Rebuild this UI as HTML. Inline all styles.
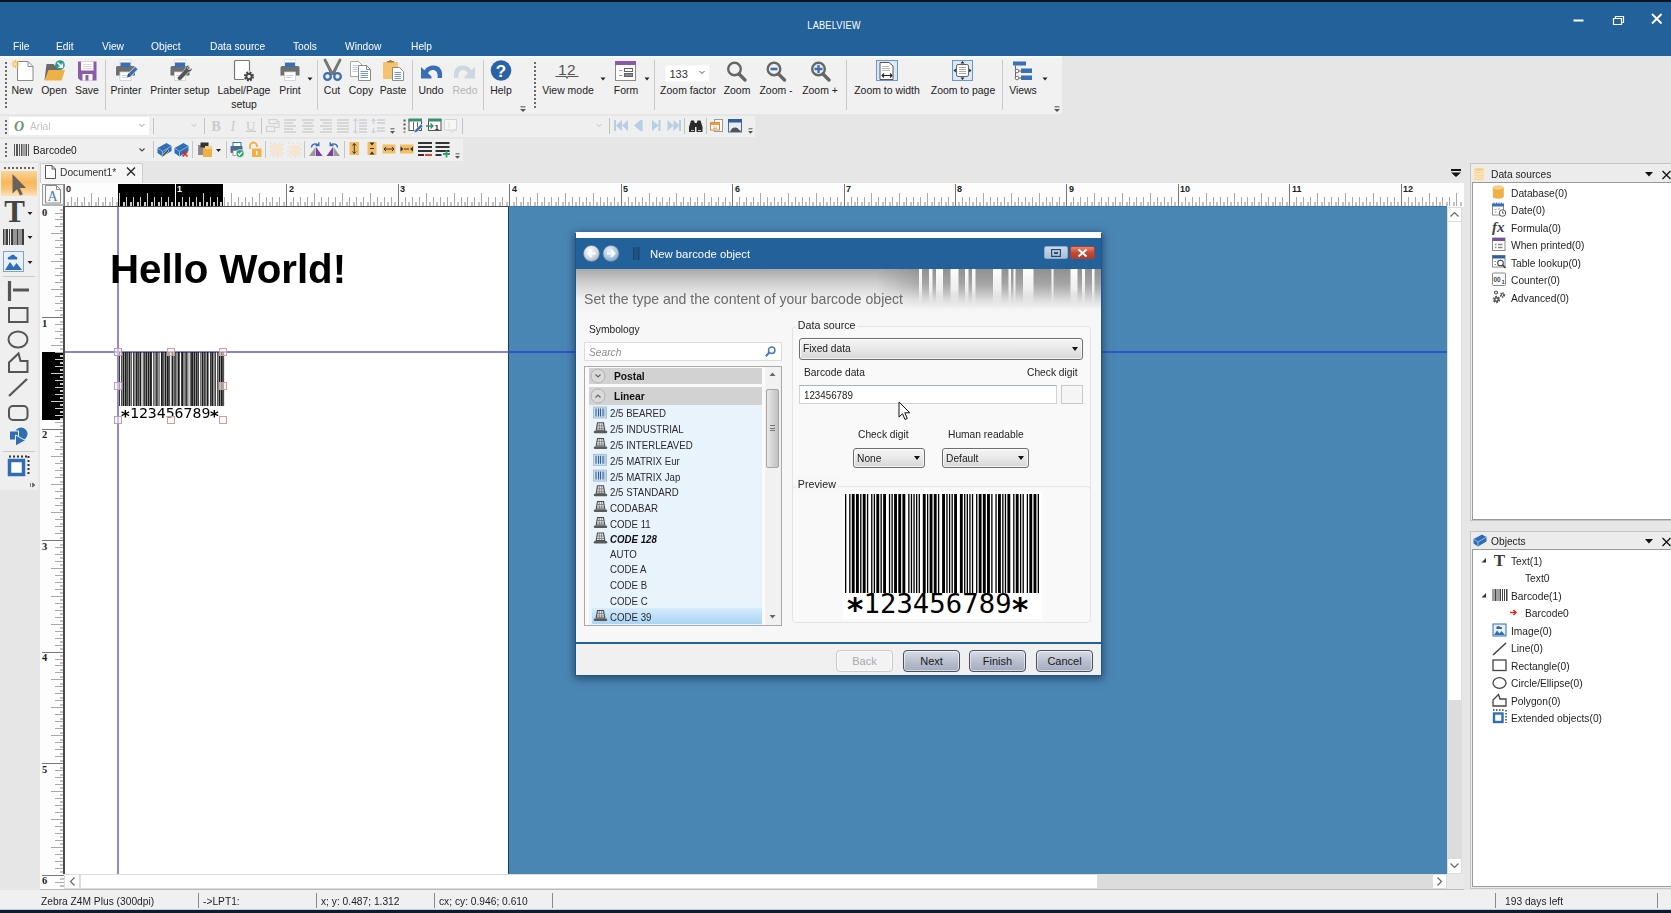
<!DOCTYPE html>
<html lang="en"><head><meta charset="utf-8"><title>LABELVIEW</title>
<style>
*{box-sizing:border-box;margin:0;padding:0}
html,body{width:1671px;height:913px;overflow:hidden}
body{position:relative;background:#e6e6e6;font-family:"Liberation Sans",sans-serif;font-size:11px;color:#1e1e1e;line-height:1}
.a{position:absolute}
.t{position:absolute;white-space:nowrap;line-height:14px;height:14px;transform:scaleX(var(--s,.93));transform-origin:0 50%}
.t.c{transform:translateX(-50%) scaleX(var(--s,.95));transform-origin:50% 50%}
svg{position:absolute;overflow:visible}
/* title + menu */
#topline{left:0;top:0;width:1671px;height:2px;background:#0b1424}
#title{left:0;top:2px;width:1671px;height:54px;background:#22619a}
#title .t{color:#fff}
.menu{color:#fff;font-size:11px;top:36.500px}
/* ribbon */
#ribbon{left:0;top:56px;width:1062px;height:58px;background:#f1f1f1}
.rl{top:83px;font-size:11px;color:#222}
.vsep{position:absolute;width:1px;background:#c9c9c9}
.grip{position:absolute;width:2px;background-image:linear-gradient(#6a6a6a 45%,transparent 45%);background-size:2px 4px}
.tb{position:absolute;background:#efefef}
/* ruler */
#rulh{left:64px;top:183px;width:1398px;height:23px;background:#fdfdfd;overflow:hidden}
#rulh i{position:absolute;bottom:0;width:1px}
#rulh b{position:absolute;top:2px;font-weight:bold;font-size:9px;line-height:10px;color:#222;margin-top:-1px}
#rulv{left:40px;top:207px;width:24px;height:683px;background:#fdfdfd;overflow:hidden}
#rulv i{position:absolute;right:0;height:1px}
#rulv b{position:absolute;left:2px;font-family:"Liberation Serif",serif;font-weight:bold;font-size:10.500px;line-height:10px;color:#222}
.ast{display:inline-block;transform:translateY(.2em) scale(1.15);transform-origin:50% 38%;font-weight:bold}
</style></head><body>
<div class="a" id="title">
 <div class="t c" style="left:834px;top:16px;font-size:10.5px;letter-spacing:.2px;--s:.88">LABELVIEW</div>
 <svg style="left:1572px;top:12px" width="90" height="14" fill="none" stroke="#fff" stroke-width="1.6"><path d="M1.5 6.5h10" stroke-width="2"/><path d="M41.5 4.5h8v6h-8z" stroke-width="1.2"/><path d="M43.5 4.5v-2h8v6h-2" stroke-width="1.2"/><path d="M80 0l9.500 9.500M89.500 0l-9.500 9.500" stroke-width="1.900"/></svg>
 <div class="t menu" style="left:13px">File</div>
 <div class="t menu" style="left:56px">Edit</div>
 <div class="t menu" style="left:102px">View</div>
 <div class="t menu" style="left:151px">Object</div>
 <div class="t menu" style="left:210px">Data source</div>
 <div class="t menu" style="left:293px">Tools</div>
 <div class="t menu" style="left:345px">Window</div>
 <div class="t menu" style="left:411px">Help</div>
</div>
<div class="a" id="topline"></div>
<div class="a" id="ribbon"></div>
<!-- ribbon labels -->
<div class="grip" style="left:5px;top:62px;height:46px"></div>
<div class="t rl c" style="left:22px">New</div>
<div class="t rl c" style="left:54px">Open</div>
<div class="t rl c" style="left:87px">Save</div>
<div class="vsep" style="left:105px;top:60px;height:50px"></div>
<div class="t rl c" style="left:126px">Printer</div>
<div class="t rl c" style="left:180px">Printer setup</div>
<div class="t rl c" style="left:244px">Label/Page</div>
<div class="t rl c" style="left:244px;top:97px">setup</div>
<div class="t rl c" style="left:290px">Print</div>
<div class="vsep" style="left:317px;top:60px;height:50px"></div>
<div class="t rl c" style="left:332px">Cut</div>
<div class="t rl c" style="left:361px">Copy</div>
<div class="t rl c" style="left:393px">Paste</div>
<div class="vsep" style="left:412px;top:60px;height:50px"></div>
<div class="t rl c" style="left:431px">Undo</div>
<div class="t rl c" style="left:465px;color:#b4b4b4">Redo</div>
<div class="vsep" style="left:483px;top:60px;height:50px"></div>
<div class="t rl c" style="left:501px">Help</div>
<div class="grip" style="left:534px;top:62px;height:46px"></div>
<div class="t rl c" style="left:568px">View mode</div>
<div class="t rl c" style="left:626px">Form</div>
<div class="vsep" style="left:654px;top:60px;height:50px"></div>
<div class="t rl c" style="left:688px">Zoom factor</div>
<div class="t rl c" style="left:737px">Zoom</div>
<div class="t rl c" style="left:776px">Zoom -</div>
<div class="t rl c" style="left:820px">Zoom +</div>
<div class="vsep" style="left:846px;top:60px;height:50px"></div>
<div class="t rl c" style="left:887px">Zoom to width</div>
<div class="t rl c" style="left:963px">Zoom to page</div>
<div class="vsep" style="left:1002px;top:60px;height:50px"></div>
<div class="t rl c" style="left:1023px">Views</div>

<!-- toolbar row 2 & 3 -->
<div class="tb" style="left:0;top:116px;width:755px;height:21px"></div>
<div class="tb" style="left:0;top:139px;width:463px;height:22px"></div>
<div class="grip" style="left:5px;top:120px;height:14px"></div>
<div class="grip" style="left:5px;top:143px;height:14px"></div>
<div class="a" style="left:9px;top:117px;width:140px;height:18px;background:#fff"></div>
<div class="t" style="left:30px;top:119px;color:#c4c4c4;font-size:11px">Arial</div>
<div class="t" style="left:33px;top:143px;font-size:11px;color:#222">Barcode0</div>

<!-- tab row -->
<div class="a" style="left:40px;top:163px;width:103px;height:20px;background:#f6f6f6;border:1px solid #d0d0d0;border-bottom:none"></div>
<div class="t" style="left:60px;top:165px;font-size:11px;color:#333">Document1*</div>
<svg style="left:1451px;top:169px" width="10" height="8" fill="#111"><path d="M0 0h10v2h-10zM0 3.5h10l-5 4.5z"/></svg>

<!-- rulers -->
<div class="a" style="left:40px;top:183px;width:1424px;height:24px;background:#fdfdfd"></div>
<div class="a" id="rulh">
 <div class="a" style="left:54px;top:1px;width:105px;height:22px;background:#000"></div>
 <i style="left:-0.5px;height:22px;background:#777"></i><i style="left:3.0px;height:4px;background:#c2c2c2;width:2px"></i><i style="left:6.5px;height:9px;background:#a9a9a9"></i><i style="left:9.9px;height:4px;background:#c2c2c2;width:2px"></i><i style="left:13.4px;height:9px;background:#a9a9a9"></i><i style="left:16.9px;height:4px;background:#c2c2c2;width:2px"></i><i style="left:20.4px;height:9px;background:#a9a9a9"></i><i style="left:23.9px;height:4px;background:#c2c2c2;width:2px"></i><i style="left:27.4px;height:13px;background:#a9a9a9"></i><i style="left:30.8px;height:4px;background:#c2c2c2;width:2px"></i><i style="left:34.3px;height:9px;background:#a9a9a9"></i><i style="left:37.8px;height:4px;background:#c2c2c2;width:2px"></i><i style="left:41.3px;height:9px;background:#a9a9a9"></i><i style="left:44.8px;height:4px;background:#c2c2c2;width:2px"></i><i style="left:48.3px;height:9px;background:#a9a9a9"></i><i style="left:51.7px;height:4px;background:#c2c2c2;width:2px"></i><i style="left:55.2px;height:13px;background:#d0d0d0"></i><i style="left:58.7px;height:4px;background:#d0d0d0;width:2px"></i><i style="left:62.2px;height:9px;background:#d0d0d0"></i><i style="left:65.7px;height:4px;background:#d0d0d0;width:2px"></i><i style="left:69.1px;height:9px;background:#d0d0d0"></i><i style="left:72.6px;height:4px;background:#d0d0d0;width:2px"></i><i style="left:76.1px;height:9px;background:#d0d0d0"></i><i style="left:79.6px;height:4px;background:#d0d0d0;width:2px"></i><i style="left:83.1px;height:13px;background:#d0d0d0"></i><i style="left:86.6px;height:4px;background:#d0d0d0;width:2px"></i><i style="left:90.0px;height:9px;background:#d0d0d0"></i><i style="left:93.5px;height:4px;background:#d0d0d0;width:2px"></i><i style="left:97.0px;height:9px;background:#d0d0d0"></i><i style="left:100.5px;height:4px;background:#d0d0d0;width:2px"></i><i style="left:104.0px;height:9px;background:#d0d0d0"></i><i style="left:107.4px;height:4px;background:#d0d0d0;width:2px"></i><i style="left:110.9px;height:22px;background:#fff"></i><i style="left:114.4px;height:4px;background:#d0d0d0;width:2px"></i><i style="left:117.9px;height:9px;background:#d0d0d0"></i><i style="left:121.4px;height:4px;background:#d0d0d0;width:2px"></i><i style="left:124.9px;height:9px;background:#d0d0d0"></i><i style="left:128.3px;height:4px;background:#d0d0d0;width:2px"></i><i style="left:131.8px;height:9px;background:#d0d0d0"></i><i style="left:135.3px;height:4px;background:#d0d0d0;width:2px"></i><i style="left:138.8px;height:13px;background:#d0d0d0"></i><i style="left:142.3px;height:4px;background:#d0d0d0;width:2px"></i><i style="left:145.8px;height:9px;background:#d0d0d0"></i><i style="left:149.2px;height:4px;background:#d0d0d0;width:2px"></i><i style="left:152.7px;height:9px;background:#d0d0d0"></i><i style="left:156.2px;height:4px;background:#d0d0d0;width:2px"></i><i style="left:159.7px;height:9px;background:#a9a9a9"></i><i style="left:163.2px;height:4px;background:#c2c2c2;width:2px"></i><i style="left:166.6px;height:13px;background:#a9a9a9"></i><i style="left:170.1px;height:4px;background:#c2c2c2;width:2px"></i><i style="left:173.6px;height:9px;background:#a9a9a9"></i><i style="left:177.1px;height:4px;background:#c2c2c2;width:2px"></i><i style="left:180.6px;height:9px;background:#a9a9a9"></i><i style="left:184.1px;height:4px;background:#c2c2c2;width:2px"></i><i style="left:187.5px;height:9px;background:#a9a9a9"></i><i style="left:191.0px;height:4px;background:#c2c2c2;width:2px"></i><i style="left:194.5px;height:13px;background:#a9a9a9"></i><i style="left:198.0px;height:4px;background:#c2c2c2;width:2px"></i><i style="left:201.5px;height:9px;background:#a9a9a9"></i><i style="left:204.9px;height:4px;background:#c2c2c2;width:2px"></i><i style="left:208.4px;height:9px;background:#a9a9a9"></i><i style="left:211.9px;height:4px;background:#c2c2c2;width:2px"></i><i style="left:215.4px;height:9px;background:#a9a9a9"></i><i style="left:218.9px;height:4px;background:#c2c2c2;width:2px"></i><i style="left:222.4px;height:22px;background:#777"></i><i style="left:225.8px;height:4px;background:#c2c2c2;width:2px"></i><i style="left:229.3px;height:9px;background:#a9a9a9"></i><i style="left:232.8px;height:4px;background:#c2c2c2;width:2px"></i><i style="left:236.3px;height:9px;background:#a9a9a9"></i><i style="left:239.8px;height:4px;background:#c2c2c2;width:2px"></i><i style="left:243.3px;height:9px;background:#a9a9a9"></i><i style="left:246.7px;height:4px;background:#c2c2c2;width:2px"></i><i style="left:250.2px;height:13px;background:#a9a9a9"></i><i style="left:253.7px;height:4px;background:#c2c2c2;width:2px"></i><i style="left:257.2px;height:9px;background:#a9a9a9"></i><i style="left:260.7px;height:4px;background:#c2c2c2;width:2px"></i><i style="left:264.1px;height:9px;background:#a9a9a9"></i><i style="left:267.6px;height:4px;background:#c2c2c2;width:2px"></i><i style="left:271.1px;height:9px;background:#a9a9a9"></i><i style="left:274.6px;height:4px;background:#c2c2c2;width:2px"></i><i style="left:278.1px;height:13px;background:#a9a9a9"></i><i style="left:281.6px;height:4px;background:#c2c2c2;width:2px"></i><i style="left:285.0px;height:9px;background:#a9a9a9"></i><i style="left:288.5px;height:4px;background:#c2c2c2;width:2px"></i><i style="left:292.0px;height:9px;background:#a9a9a9"></i><i style="left:295.5px;height:4px;background:#c2c2c2;width:2px"></i><i style="left:299.0px;height:9px;background:#a9a9a9"></i><i style="left:302.5px;height:4px;background:#c2c2c2;width:2px"></i><i style="left:305.9px;height:13px;background:#a9a9a9"></i><i style="left:309.4px;height:4px;background:#c2c2c2;width:2px"></i><i style="left:312.9px;height:9px;background:#a9a9a9"></i><i style="left:316.4px;height:4px;background:#c2c2c2;width:2px"></i><i style="left:319.9px;height:9px;background:#a9a9a9"></i><i style="left:323.3px;height:4px;background:#c2c2c2;width:2px"></i><i style="left:326.8px;height:9px;background:#a9a9a9"></i><i style="left:330.3px;height:4px;background:#c2c2c2;width:2px"></i><i style="left:333.8px;height:22px;background:#777"></i><i style="left:337.3px;height:4px;background:#c2c2c2;width:2px"></i><i style="left:340.8px;height:9px;background:#a9a9a9"></i><i style="left:344.2px;height:4px;background:#c2c2c2;width:2px"></i><i style="left:347.7px;height:9px;background:#a9a9a9"></i><i style="left:351.2px;height:4px;background:#c2c2c2;width:2px"></i><i style="left:354.7px;height:9px;background:#a9a9a9"></i><i style="left:358.2px;height:4px;background:#c2c2c2;width:2px"></i><i style="left:361.6px;height:13px;background:#a9a9a9"></i><i style="left:365.1px;height:4px;background:#c2c2c2;width:2px"></i><i style="left:368.6px;height:9px;background:#a9a9a9"></i><i style="left:372.1px;height:4px;background:#c2c2c2;width:2px"></i><i style="left:375.6px;height:9px;background:#a9a9a9"></i><i style="left:379.1px;height:4px;background:#c2c2c2;width:2px"></i><i style="left:382.5px;height:9px;background:#a9a9a9"></i><i style="left:386.0px;height:4px;background:#c2c2c2;width:2px"></i><i style="left:389.5px;height:13px;background:#a9a9a9"></i><i style="left:393.0px;height:4px;background:#c2c2c2;width:2px"></i><i style="left:396.5px;height:9px;background:#a9a9a9"></i><i style="left:400.0px;height:4px;background:#c2c2c2;width:2px"></i><i style="left:403.4px;height:9px;background:#a9a9a9"></i><i style="left:406.9px;height:4px;background:#c2c2c2;width:2px"></i><i style="left:410.4px;height:9px;background:#a9a9a9"></i><i style="left:413.9px;height:4px;background:#c2c2c2;width:2px"></i><i style="left:417.4px;height:13px;background:#a9a9a9"></i><i style="left:420.8px;height:4px;background:#c2c2c2;width:2px"></i><i style="left:424.3px;height:9px;background:#a9a9a9"></i><i style="left:427.8px;height:4px;background:#c2c2c2;width:2px"></i><i style="left:431.3px;height:9px;background:#a9a9a9"></i><i style="left:434.8px;height:4px;background:#c2c2c2;width:2px"></i><i style="left:438.3px;height:9px;background:#a9a9a9"></i><i style="left:441.7px;height:4px;background:#c2c2c2;width:2px"></i><i style="left:445.2px;height:22px;background:#777"></i><i style="left:448.7px;height:4px;background:#c2c2c2;width:2px"></i><i style="left:452.2px;height:9px;background:#a9a9a9"></i><i style="left:455.7px;height:4px;background:#c2c2c2;width:2px"></i><i style="left:459.1px;height:9px;background:#a9a9a9"></i><i style="left:462.6px;height:4px;background:#c2c2c2;width:2px"></i><i style="left:466.1px;height:9px;background:#a9a9a9"></i><i style="left:469.6px;height:4px;background:#c2c2c2;width:2px"></i><i style="left:473.1px;height:13px;background:#a9a9a9"></i><i style="left:476.6px;height:4px;background:#c2c2c2;width:2px"></i><i style="left:480.0px;height:9px;background:#a9a9a9"></i><i style="left:483.5px;height:4px;background:#c2c2c2;width:2px"></i><i style="left:487.0px;height:9px;background:#a9a9a9"></i><i style="left:490.5px;height:4px;background:#c2c2c2;width:2px"></i><i style="left:494.0px;height:9px;background:#a9a9a9"></i><i style="left:497.5px;height:4px;background:#c2c2c2;width:2px"></i><i style="left:500.9px;height:13px;background:#a9a9a9"></i><i style="left:504.4px;height:4px;background:#c2c2c2;width:2px"></i><i style="left:507.9px;height:9px;background:#a9a9a9"></i><i style="left:511.4px;height:4px;background:#c2c2c2;width:2px"></i><i style="left:514.9px;height:9px;background:#a9a9a9"></i><i style="left:518.3px;height:4px;background:#c2c2c2;width:2px"></i><i style="left:521.8px;height:9px;background:#a9a9a9"></i><i style="left:525.3px;height:4px;background:#c2c2c2;width:2px"></i><i style="left:528.8px;height:13px;background:#a9a9a9"></i><i style="left:532.3px;height:4px;background:#c2c2c2;width:2px"></i><i style="left:535.8px;height:9px;background:#a9a9a9"></i><i style="left:539.2px;height:4px;background:#c2c2c2;width:2px"></i><i style="left:542.7px;height:9px;background:#a9a9a9"></i><i style="left:546.2px;height:4px;background:#c2c2c2;width:2px"></i><i style="left:549.7px;height:9px;background:#a9a9a9"></i><i style="left:553.2px;height:4px;background:#c2c2c2;width:2px"></i><i style="left:556.7px;height:22px;background:#777"></i><i style="left:560.1px;height:4px;background:#c2c2c2;width:2px"></i><i style="left:563.6px;height:9px;background:#a9a9a9"></i><i style="left:567.1px;height:4px;background:#c2c2c2;width:2px"></i><i style="left:570.6px;height:9px;background:#a9a9a9"></i><i style="left:574.1px;height:4px;background:#c2c2c2;width:2px"></i><i style="left:577.5px;height:9px;background:#a9a9a9"></i><i style="left:581.0px;height:4px;background:#c2c2c2;width:2px"></i><i style="left:584.5px;height:13px;background:#a9a9a9"></i><i style="left:588.0px;height:4px;background:#c2c2c2;width:2px"></i><i style="left:591.5px;height:9px;background:#a9a9a9"></i><i style="left:595.0px;height:4px;background:#c2c2c2;width:2px"></i><i style="left:598.4px;height:9px;background:#a9a9a9"></i><i style="left:601.9px;height:4px;background:#c2c2c2;width:2px"></i><i style="left:605.4px;height:9px;background:#a9a9a9"></i><i style="left:608.9px;height:4px;background:#c2c2c2;width:2px"></i><i style="left:612.4px;height:13px;background:#a9a9a9"></i><i style="left:615.8px;height:4px;background:#c2c2c2;width:2px"></i><i style="left:619.3px;height:9px;background:#a9a9a9"></i><i style="left:622.8px;height:4px;background:#c2c2c2;width:2px"></i><i style="left:626.3px;height:9px;background:#a9a9a9"></i><i style="left:629.8px;height:4px;background:#c2c2c2;width:2px"></i><i style="left:633.3px;height:9px;background:#a9a9a9"></i><i style="left:636.7px;height:4px;background:#c2c2c2;width:2px"></i><i style="left:640.2px;height:13px;background:#a9a9a9"></i><i style="left:643.7px;height:4px;background:#c2c2c2;width:2px"></i><i style="left:647.2px;height:9px;background:#a9a9a9"></i><i style="left:650.7px;height:4px;background:#c2c2c2;width:2px"></i><i style="left:654.2px;height:9px;background:#a9a9a9"></i><i style="left:657.6px;height:4px;background:#c2c2c2;width:2px"></i><i style="left:661.1px;height:9px;background:#a9a9a9"></i><i style="left:664.6px;height:4px;background:#c2c2c2;width:2px"></i><i style="left:668.1px;height:22px;background:#777"></i><i style="left:671.6px;height:4px;background:#c2c2c2;width:2px"></i><i style="left:675.0px;height:9px;background:#a9a9a9"></i><i style="left:678.5px;height:4px;background:#c2c2c2;width:2px"></i><i style="left:682.0px;height:9px;background:#a9a9a9"></i><i style="left:685.5px;height:4px;background:#c2c2c2;width:2px"></i><i style="left:689.0px;height:9px;background:#a9a9a9"></i><i style="left:692.5px;height:4px;background:#c2c2c2;width:2px"></i><i style="left:695.9px;height:13px;background:#a9a9a9"></i><i style="left:699.4px;height:4px;background:#c2c2c2;width:2px"></i><i style="left:702.9px;height:9px;background:#a9a9a9"></i><i style="left:706.4px;height:4px;background:#c2c2c2;width:2px"></i><i style="left:709.9px;height:9px;background:#a9a9a9"></i><i style="left:713.3px;height:4px;background:#c2c2c2;width:2px"></i><i style="left:716.8px;height:9px;background:#a9a9a9"></i><i style="left:720.3px;height:4px;background:#c2c2c2;width:2px"></i><i style="left:723.8px;height:13px;background:#a9a9a9"></i><i style="left:727.3px;height:4px;background:#c2c2c2;width:2px"></i><i style="left:730.8px;height:9px;background:#a9a9a9"></i><i style="left:734.2px;height:4px;background:#c2c2c2;width:2px"></i><i style="left:737.7px;height:9px;background:#a9a9a9"></i><i style="left:741.2px;height:4px;background:#c2c2c2;width:2px"></i><i style="left:744.7px;height:9px;background:#a9a9a9"></i><i style="left:748.2px;height:4px;background:#c2c2c2;width:2px"></i><i style="left:751.7px;height:13px;background:#a9a9a9"></i><i style="left:755.1px;height:4px;background:#c2c2c2;width:2px"></i><i style="left:758.6px;height:9px;background:#a9a9a9"></i><i style="left:762.1px;height:4px;background:#c2c2c2;width:2px"></i><i style="left:765.6px;height:9px;background:#a9a9a9"></i><i style="left:769.1px;height:4px;background:#c2c2c2;width:2px"></i><i style="left:772.5px;height:9px;background:#a9a9a9"></i><i style="left:776.0px;height:4px;background:#c2c2c2;width:2px"></i><i style="left:779.5px;height:22px;background:#777"></i><i style="left:783.0px;height:4px;background:#c2c2c2;width:2px"></i><i style="left:786.5px;height:9px;background:#a9a9a9"></i><i style="left:790.0px;height:4px;background:#c2c2c2;width:2px"></i><i style="left:793.4px;height:9px;background:#a9a9a9"></i><i style="left:796.9px;height:4px;background:#c2c2c2;width:2px"></i><i style="left:800.4px;height:9px;background:#a9a9a9"></i><i style="left:803.9px;height:4px;background:#c2c2c2;width:2px"></i><i style="left:807.4px;height:13px;background:#a9a9a9"></i><i style="left:810.8px;height:4px;background:#c2c2c2;width:2px"></i><i style="left:814.3px;height:9px;background:#a9a9a9"></i><i style="left:817.8px;height:4px;background:#c2c2c2;width:2px"></i><i style="left:821.3px;height:9px;background:#a9a9a9"></i><i style="left:824.8px;height:4px;background:#c2c2c2;width:2px"></i><i style="left:828.3px;height:9px;background:#a9a9a9"></i><i style="left:831.7px;height:4px;background:#c2c2c2;width:2px"></i><i style="left:835.2px;height:13px;background:#a9a9a9"></i><i style="left:838.7px;height:4px;background:#c2c2c2;width:2px"></i><i style="left:842.2px;height:9px;background:#a9a9a9"></i><i style="left:845.7px;height:4px;background:#c2c2c2;width:2px"></i><i style="left:849.2px;height:9px;background:#a9a9a9"></i><i style="left:852.6px;height:4px;background:#c2c2c2;width:2px"></i><i style="left:856.1px;height:9px;background:#a9a9a9"></i><i style="left:859.6px;height:4px;background:#c2c2c2;width:2px"></i><i style="left:863.1px;height:13px;background:#a9a9a9"></i><i style="left:866.6px;height:4px;background:#c2c2c2;width:2px"></i><i style="left:870.0px;height:9px;background:#a9a9a9"></i><i style="left:873.5px;height:4px;background:#c2c2c2;width:2px"></i><i style="left:877.0px;height:9px;background:#a9a9a9"></i><i style="left:880.5px;height:4px;background:#c2c2c2;width:2px"></i><i style="left:884.0px;height:9px;background:#a9a9a9"></i><i style="left:887.5px;height:4px;background:#c2c2c2;width:2px"></i><i style="left:890.9px;height:22px;background:#777"></i><i style="left:894.4px;height:4px;background:#c2c2c2;width:2px"></i><i style="left:897.9px;height:9px;background:#a9a9a9"></i><i style="left:901.4px;height:4px;background:#c2c2c2;width:2px"></i><i style="left:904.9px;height:9px;background:#a9a9a9"></i><i style="left:908.4px;height:4px;background:#c2c2c2;width:2px"></i><i style="left:911.8px;height:9px;background:#a9a9a9"></i><i style="left:915.3px;height:4px;background:#c2c2c2;width:2px"></i><i style="left:918.8px;height:13px;background:#a9a9a9"></i><i style="left:922.3px;height:4px;background:#c2c2c2;width:2px"></i><i style="left:925.8px;height:9px;background:#a9a9a9"></i><i style="left:929.2px;height:4px;background:#c2c2c2;width:2px"></i><i style="left:932.7px;height:9px;background:#a9a9a9"></i><i style="left:936.2px;height:4px;background:#c2c2c2;width:2px"></i><i style="left:939.7px;height:9px;background:#a9a9a9"></i><i style="left:943.2px;height:4px;background:#c2c2c2;width:2px"></i><i style="left:946.7px;height:13px;background:#a9a9a9"></i><i style="left:950.1px;height:4px;background:#c2c2c2;width:2px"></i><i style="left:953.6px;height:9px;background:#a9a9a9"></i><i style="left:957.1px;height:4px;background:#c2c2c2;width:2px"></i><i style="left:960.6px;height:9px;background:#a9a9a9"></i><i style="left:964.1px;height:4px;background:#c2c2c2;width:2px"></i><i style="left:967.5px;height:9px;background:#a9a9a9"></i><i style="left:971.0px;height:4px;background:#c2c2c2;width:2px"></i><i style="left:974.5px;height:13px;background:#a9a9a9"></i><i style="left:978.0px;height:4px;background:#c2c2c2;width:2px"></i><i style="left:981.5px;height:9px;background:#a9a9a9"></i><i style="left:985.0px;height:4px;background:#c2c2c2;width:2px"></i><i style="left:988.4px;height:9px;background:#a9a9a9"></i><i style="left:991.9px;height:4px;background:#c2c2c2;width:2px"></i><i style="left:995.4px;height:9px;background:#a9a9a9"></i><i style="left:998.9px;height:4px;background:#c2c2c2;width:2px"></i><i style="left:1002.4px;height:22px;background:#777"></i><i style="left:1005.9px;height:4px;background:#c2c2c2;width:2px"></i><i style="left:1009.3px;height:9px;background:#a9a9a9"></i><i style="left:1012.8px;height:4px;background:#c2c2c2;width:2px"></i><i style="left:1016.3px;height:9px;background:#a9a9a9"></i><i style="left:1019.8px;height:4px;background:#c2c2c2;width:2px"></i><i style="left:1023.3px;height:9px;background:#a9a9a9"></i><i style="left:1026.7px;height:4px;background:#c2c2c2;width:2px"></i><i style="left:1030.2px;height:13px;background:#a9a9a9"></i><i style="left:1033.7px;height:4px;background:#c2c2c2;width:2px"></i><i style="left:1037.2px;height:9px;background:#a9a9a9"></i><i style="left:1040.7px;height:4px;background:#c2c2c2;width:2px"></i><i style="left:1044.2px;height:9px;background:#a9a9a9"></i><i style="left:1047.6px;height:4px;background:#c2c2c2;width:2px"></i><i style="left:1051.1px;height:9px;background:#a9a9a9"></i><i style="left:1054.6px;height:4px;background:#c2c2c2;width:2px"></i><i style="left:1058.1px;height:13px;background:#a9a9a9"></i><i style="left:1061.6px;height:4px;background:#c2c2c2;width:2px"></i><i style="left:1065.0px;height:9px;background:#a9a9a9"></i><i style="left:1068.5px;height:4px;background:#c2c2c2;width:2px"></i><i style="left:1072.0px;height:9px;background:#a9a9a9"></i><i style="left:1075.5px;height:4px;background:#c2c2c2;width:2px"></i><i style="left:1079.0px;height:9px;background:#a9a9a9"></i><i style="left:1082.5px;height:4px;background:#c2c2c2;width:2px"></i><i style="left:1085.9px;height:13px;background:#a9a9a9"></i><i style="left:1089.4px;height:4px;background:#c2c2c2;width:2px"></i><i style="left:1092.9px;height:9px;background:#a9a9a9"></i><i style="left:1096.4px;height:4px;background:#c2c2c2;width:2px"></i><i style="left:1099.9px;height:9px;background:#a9a9a9"></i><i style="left:1103.4px;height:4px;background:#c2c2c2;width:2px"></i><i style="left:1106.8px;height:9px;background:#a9a9a9"></i><i style="left:1110.3px;height:4px;background:#c2c2c2;width:2px"></i><i style="left:1113.8px;height:22px;background:#777"></i><i style="left:1117.3px;height:4px;background:#c2c2c2;width:2px"></i><i style="left:1120.8px;height:9px;background:#a9a9a9"></i><i style="left:1124.2px;height:4px;background:#c2c2c2;width:2px"></i><i style="left:1127.7px;height:9px;background:#a9a9a9"></i><i style="left:1131.2px;height:4px;background:#c2c2c2;width:2px"></i><i style="left:1134.7px;height:9px;background:#a9a9a9"></i><i style="left:1138.2px;height:4px;background:#c2c2c2;width:2px"></i><i style="left:1141.7px;height:13px;background:#a9a9a9"></i><i style="left:1145.1px;height:4px;background:#c2c2c2;width:2px"></i><i style="left:1148.6px;height:9px;background:#a9a9a9"></i><i style="left:1152.1px;height:4px;background:#c2c2c2;width:2px"></i><i style="left:1155.6px;height:9px;background:#a9a9a9"></i><i style="left:1159.1px;height:4px;background:#c2c2c2;width:2px"></i><i style="left:1162.6px;height:9px;background:#a9a9a9"></i><i style="left:1166.0px;height:4px;background:#c2c2c2;width:2px"></i><i style="left:1169.5px;height:13px;background:#a9a9a9"></i><i style="left:1173.0px;height:4px;background:#c2c2c2;width:2px"></i><i style="left:1176.5px;height:9px;background:#a9a9a9"></i><i style="left:1180.0px;height:4px;background:#c2c2c2;width:2px"></i><i style="left:1183.4px;height:9px;background:#a9a9a9"></i><i style="left:1186.9px;height:4px;background:#c2c2c2;width:2px"></i><i style="left:1190.4px;height:9px;background:#a9a9a9"></i><i style="left:1193.9px;height:4px;background:#c2c2c2;width:2px"></i><i style="left:1197.4px;height:13px;background:#a9a9a9"></i><i style="left:1200.9px;height:4px;background:#c2c2c2;width:2px"></i><i style="left:1204.3px;height:9px;background:#a9a9a9"></i><i style="left:1207.8px;height:4px;background:#c2c2c2;width:2px"></i><i style="left:1211.3px;height:9px;background:#a9a9a9"></i><i style="left:1214.8px;height:4px;background:#c2c2c2;width:2px"></i><i style="left:1218.3px;height:9px;background:#a9a9a9"></i><i style="left:1221.7px;height:4px;background:#c2c2c2;width:2px"></i><i style="left:1225.2px;height:22px;background:#777"></i><i style="left:1228.7px;height:4px;background:#c2c2c2;width:2px"></i><i style="left:1232.2px;height:9px;background:#a9a9a9"></i><i style="left:1235.7px;height:4px;background:#c2c2c2;width:2px"></i><i style="left:1239.2px;height:9px;background:#a9a9a9"></i><i style="left:1242.6px;height:4px;background:#c2c2c2;width:2px"></i><i style="left:1246.1px;height:9px;background:#a9a9a9"></i><i style="left:1249.6px;height:4px;background:#c2c2c2;width:2px"></i><i style="left:1253.1px;height:13px;background:#a9a9a9"></i><i style="left:1256.6px;height:4px;background:#c2c2c2;width:2px"></i><i style="left:1260.1px;height:9px;background:#a9a9a9"></i><i style="left:1263.5px;height:4px;background:#c2c2c2;width:2px"></i><i style="left:1267.0px;height:9px;background:#a9a9a9"></i><i style="left:1270.5px;height:4px;background:#c2c2c2;width:2px"></i><i style="left:1274.0px;height:9px;background:#a9a9a9"></i><i style="left:1277.5px;height:4px;background:#c2c2c2;width:2px"></i><i style="left:1280.9px;height:13px;background:#a9a9a9"></i><i style="left:1284.4px;height:4px;background:#c2c2c2;width:2px"></i><i style="left:1287.9px;height:9px;background:#a9a9a9"></i><i style="left:1291.4px;height:4px;background:#c2c2c2;width:2px"></i><i style="left:1294.9px;height:9px;background:#a9a9a9"></i><i style="left:1298.4px;height:4px;background:#c2c2c2;width:2px"></i><i style="left:1301.8px;height:9px;background:#a9a9a9"></i><i style="left:1305.3px;height:4px;background:#c2c2c2;width:2px"></i><i style="left:1308.8px;height:13px;background:#a9a9a9"></i><i style="left:1312.3px;height:4px;background:#c2c2c2;width:2px"></i><i style="left:1315.8px;height:9px;background:#a9a9a9"></i><i style="left:1319.2px;height:4px;background:#c2c2c2;width:2px"></i><i style="left:1322.7px;height:9px;background:#a9a9a9"></i><i style="left:1326.2px;height:4px;background:#c2c2c2;width:2px"></i><i style="left:1329.7px;height:9px;background:#a9a9a9"></i><i style="left:1333.2px;height:4px;background:#c2c2c2;width:2px"></i><i style="left:1336.7px;height:22px;background:#777"></i><i style="left:1340.1px;height:4px;background:#c2c2c2;width:2px"></i><i style="left:1343.6px;height:9px;background:#a9a9a9"></i><i style="left:1347.1px;height:4px;background:#c2c2c2;width:2px"></i><i style="left:1350.6px;height:9px;background:#a9a9a9"></i><i style="left:1354.1px;height:4px;background:#c2c2c2;width:2px"></i><i style="left:1357.6px;height:9px;background:#a9a9a9"></i><i style="left:1361.0px;height:4px;background:#c2c2c2;width:2px"></i><i style="left:1364.5px;height:13px;background:#a9a9a9"></i><i style="left:1368.0px;height:4px;background:#c2c2c2;width:2px"></i><i style="left:1371.5px;height:9px;background:#a9a9a9"></i><i style="left:1375.0px;height:4px;background:#c2c2c2;width:2px"></i><i style="left:1378.4px;height:9px;background:#a9a9a9"></i><i style="left:1381.9px;height:4px;background:#c2c2c2;width:2px"></i><i style="left:1385.4px;height:9px;background:#a9a9a9"></i><i style="left:1388.9px;height:4px;background:#c2c2c2;width:2px"></i><i style="left:1392.4px;height:13px;background:#a9a9a9"></i><i style="left:1395.9px;height:4px;background:#c2c2c2;width:2px"></i>
 <b style="left:2px">0</b><b style="left:113px;color:#fff;font-weight:bold">1</b><b style="left:225px">2</b><b style="left:336px">3</b><b style="left:448px">4</b><b style="left:559px">5</b><b style="left:671px">6</b><b style="left:782px">7</b><b style="left:893px">8</b><b style="left:1005px">9</b><b style="left:1116px">10</b><b style="left:1228px">11</b><b style="left:1339px">12</b>
</div>
<div class="a" id="rulv">
 <div class="a" style="left:2px;top:144.500px;width:22px;height:68px;background:#000"></div>
 <i style="top:-1.5px;width:22px;background:#777"></i><i style="top:2.0px;width:4px;background:#c2c2c2;height:2px"></i><i style="top:5.5px;width:9px;background:#a9a9a9"></i><i style="top:9.0px;width:4px;background:#c2c2c2;height:2px"></i><i style="top:12.4px;width:9px;background:#a9a9a9"></i><i style="top:15.9px;width:4px;background:#c2c2c2;height:2px"></i><i style="top:19.4px;width:9px;background:#a9a9a9"></i><i style="top:22.9px;width:4px;background:#c2c2c2;height:2px"></i><i style="top:26.4px;width:13px;background:#a9a9a9"></i><i style="top:29.9px;width:4px;background:#c2c2c2;height:2px"></i><i style="top:33.3px;width:9px;background:#a9a9a9"></i><i style="top:36.8px;width:4px;background:#c2c2c2;height:2px"></i><i style="top:40.3px;width:9px;background:#a9a9a9"></i><i style="top:43.8px;width:4px;background:#c2c2c2;height:2px"></i><i style="top:47.3px;width:9px;background:#a9a9a9"></i><i style="top:50.8px;width:4px;background:#c2c2c2;height:2px"></i><i style="top:54.2px;width:13px;background:#a9a9a9"></i><i style="top:57.7px;width:4px;background:#c2c2c2;height:2px"></i><i style="top:61.2px;width:9px;background:#a9a9a9"></i><i style="top:64.7px;width:4px;background:#c2c2c2;height:2px"></i><i style="top:68.2px;width:9px;background:#a9a9a9"></i><i style="top:71.7px;width:4px;background:#c2c2c2;height:2px"></i><i style="top:75.2px;width:9px;background:#a9a9a9"></i><i style="top:78.6px;width:4px;background:#c2c2c2;height:2px"></i><i style="top:82.1px;width:13px;background:#a9a9a9"></i><i style="top:85.6px;width:4px;background:#c2c2c2;height:2px"></i><i style="top:89.1px;width:9px;background:#a9a9a9"></i><i style="top:92.6px;width:4px;background:#c2c2c2;height:2px"></i><i style="top:96.1px;width:9px;background:#a9a9a9"></i><i style="top:99.5px;width:4px;background:#c2c2c2;height:2px"></i><i style="top:103.0px;width:9px;background:#a9a9a9"></i><i style="top:106.5px;width:4px;background:#c2c2c2;height:2px"></i><i style="top:110.0px;width:22px;background:#777"></i><i style="top:113.5px;width:4px;background:#c2c2c2;height:2px"></i><i style="top:117.0px;width:9px;background:#a9a9a9"></i><i style="top:120.5px;width:4px;background:#c2c2c2;height:2px"></i><i style="top:123.9px;width:9px;background:#a9a9a9"></i><i style="top:127.4px;width:4px;background:#c2c2c2;height:2px"></i><i style="top:130.9px;width:9px;background:#a9a9a9"></i><i style="top:134.4px;width:4px;background:#c2c2c2;height:2px"></i><i style="top:137.9px;width:13px;background:#a9a9a9"></i><i style="top:141.4px;width:4px;background:#c2c2c2;height:2px"></i><i style="top:144.8px;width:9px;background:#a9a9a9"></i><i style="top:148.3px;width:4px;background:#d0d0d0;height:2px"></i><i style="top:151.8px;width:9px;background:#d0d0d0"></i><i style="top:155.3px;width:4px;background:#d0d0d0;height:2px"></i><i style="top:158.8px;width:9px;background:#d0d0d0"></i><i style="top:162.3px;width:4px;background:#d0d0d0;height:2px"></i><i style="top:165.8px;width:13px;background:#d0d0d0"></i><i style="top:169.2px;width:4px;background:#d0d0d0;height:2px"></i><i style="top:172.7px;width:9px;background:#d0d0d0"></i><i style="top:176.2px;width:4px;background:#d0d0d0;height:2px"></i><i style="top:179.7px;width:9px;background:#d0d0d0"></i><i style="top:183.2px;width:4px;background:#d0d0d0;height:2px"></i><i style="top:186.7px;width:9px;background:#d0d0d0"></i><i style="top:190.1px;width:4px;background:#d0d0d0;height:2px"></i><i style="top:193.6px;width:13px;background:#d0d0d0"></i><i style="top:197.1px;width:4px;background:#d0d0d0;height:2px"></i><i style="top:200.6px;width:9px;background:#d0d0d0"></i><i style="top:204.1px;width:4px;background:#d0d0d0;height:2px"></i><i style="top:207.6px;width:9px;background:#d0d0d0"></i><i style="top:211.0px;width:4px;background:#d0d0d0;height:2px"></i><i style="top:214.5px;width:9px;background:#a9a9a9"></i><i style="top:218.0px;width:4px;background:#c2c2c2;height:2px"></i><i style="top:221.5px;width:22px;background:#777"></i><i style="top:225.0px;width:4px;background:#c2c2c2;height:2px"></i><i style="top:228.5px;width:9px;background:#a9a9a9"></i><i style="top:232.0px;width:4px;background:#c2c2c2;height:2px"></i><i style="top:235.4px;width:9px;background:#a9a9a9"></i><i style="top:238.9px;width:4px;background:#c2c2c2;height:2px"></i><i style="top:242.4px;width:9px;background:#a9a9a9"></i><i style="top:245.9px;width:4px;background:#c2c2c2;height:2px"></i><i style="top:249.4px;width:13px;background:#a9a9a9"></i><i style="top:252.9px;width:4px;background:#c2c2c2;height:2px"></i><i style="top:256.3px;width:9px;background:#a9a9a9"></i><i style="top:259.8px;width:4px;background:#c2c2c2;height:2px"></i><i style="top:263.3px;width:9px;background:#a9a9a9"></i><i style="top:266.8px;width:4px;background:#c2c2c2;height:2px"></i><i style="top:270.3px;width:9px;background:#a9a9a9"></i><i style="top:273.8px;width:4px;background:#c2c2c2;height:2px"></i><i style="top:277.2px;width:13px;background:#a9a9a9"></i><i style="top:280.7px;width:4px;background:#c2c2c2;height:2px"></i><i style="top:284.2px;width:9px;background:#a9a9a9"></i><i style="top:287.7px;width:4px;background:#c2c2c2;height:2px"></i><i style="top:291.2px;width:9px;background:#a9a9a9"></i><i style="top:294.7px;width:4px;background:#c2c2c2;height:2px"></i><i style="top:298.2px;width:9px;background:#a9a9a9"></i><i style="top:301.6px;width:4px;background:#c2c2c2;height:2px"></i><i style="top:305.1px;width:13px;background:#a9a9a9"></i><i style="top:308.6px;width:4px;background:#c2c2c2;height:2px"></i><i style="top:312.1px;width:9px;background:#a9a9a9"></i><i style="top:315.6px;width:4px;background:#c2c2c2;height:2px"></i><i style="top:319.1px;width:9px;background:#a9a9a9"></i><i style="top:322.5px;width:4px;background:#c2c2c2;height:2px"></i><i style="top:326.0px;width:9px;background:#a9a9a9"></i><i style="top:329.5px;width:4px;background:#c2c2c2;height:2px"></i><i style="top:333.0px;width:22px;background:#777"></i><i style="top:336.5px;width:4px;background:#c2c2c2;height:2px"></i><i style="top:340.0px;width:9px;background:#a9a9a9"></i><i style="top:343.5px;width:4px;background:#c2c2c2;height:2px"></i><i style="top:346.9px;width:9px;background:#a9a9a9"></i><i style="top:350.4px;width:4px;background:#c2c2c2;height:2px"></i><i style="top:353.9px;width:9px;background:#a9a9a9"></i><i style="top:357.4px;width:4px;background:#c2c2c2;height:2px"></i><i style="top:360.9px;width:13px;background:#a9a9a9"></i><i style="top:364.4px;width:4px;background:#c2c2c2;height:2px"></i><i style="top:367.8px;width:9px;background:#a9a9a9"></i><i style="top:371.3px;width:4px;background:#c2c2c2;height:2px"></i><i style="top:374.8px;width:9px;background:#a9a9a9"></i><i style="top:378.3px;width:4px;background:#c2c2c2;height:2px"></i><i style="top:381.8px;width:9px;background:#a9a9a9"></i><i style="top:385.3px;width:4px;background:#c2c2c2;height:2px"></i><i style="top:388.8px;width:13px;background:#a9a9a9"></i><i style="top:392.2px;width:4px;background:#c2c2c2;height:2px"></i><i style="top:395.7px;width:9px;background:#a9a9a9"></i><i style="top:399.2px;width:4px;background:#c2c2c2;height:2px"></i><i style="top:402.7px;width:9px;background:#a9a9a9"></i><i style="top:406.2px;width:4px;background:#c2c2c2;height:2px"></i><i style="top:409.7px;width:9px;background:#a9a9a9"></i><i style="top:413.1px;width:4px;background:#c2c2c2;height:2px"></i><i style="top:416.6px;width:13px;background:#a9a9a9"></i><i style="top:420.1px;width:4px;background:#c2c2c2;height:2px"></i><i style="top:423.6px;width:9px;background:#a9a9a9"></i><i style="top:427.1px;width:4px;background:#c2c2c2;height:2px"></i><i style="top:430.6px;width:9px;background:#a9a9a9"></i><i style="top:434.0px;width:4px;background:#c2c2c2;height:2px"></i><i style="top:437.5px;width:9px;background:#a9a9a9"></i><i style="top:441.0px;width:4px;background:#c2c2c2;height:2px"></i><i style="top:444.5px;width:22px;background:#777"></i><i style="top:448.0px;width:4px;background:#c2c2c2;height:2px"></i><i style="top:451.5px;width:9px;background:#a9a9a9"></i><i style="top:455.0px;width:4px;background:#c2c2c2;height:2px"></i><i style="top:458.4px;width:9px;background:#a9a9a9"></i><i style="top:461.9px;width:4px;background:#c2c2c2;height:2px"></i><i style="top:465.4px;width:9px;background:#a9a9a9"></i><i style="top:468.9px;width:4px;background:#c2c2c2;height:2px"></i><i style="top:472.4px;width:13px;background:#a9a9a9"></i><i style="top:475.9px;width:4px;background:#c2c2c2;height:2px"></i><i style="top:479.3px;width:9px;background:#a9a9a9"></i><i style="top:482.8px;width:4px;background:#c2c2c2;height:2px"></i><i style="top:486.3px;width:9px;background:#a9a9a9"></i><i style="top:489.8px;width:4px;background:#c2c2c2;height:2px"></i><i style="top:493.3px;width:9px;background:#a9a9a9"></i><i style="top:496.8px;width:4px;background:#c2c2c2;height:2px"></i><i style="top:500.2px;width:13px;background:#a9a9a9"></i><i style="top:503.7px;width:4px;background:#c2c2c2;height:2px"></i><i style="top:507.2px;width:9px;background:#a9a9a9"></i><i style="top:510.7px;width:4px;background:#c2c2c2;height:2px"></i><i style="top:514.2px;width:9px;background:#a9a9a9"></i><i style="top:517.7px;width:4px;background:#c2c2c2;height:2px"></i><i style="top:521.2px;width:9px;background:#a9a9a9"></i><i style="top:524.6px;width:4px;background:#c2c2c2;height:2px"></i><i style="top:528.1px;width:13px;background:#a9a9a9"></i><i style="top:531.6px;width:4px;background:#c2c2c2;height:2px"></i><i style="top:535.1px;width:9px;background:#a9a9a9"></i><i style="top:538.6px;width:4px;background:#c2c2c2;height:2px"></i><i style="top:542.1px;width:9px;background:#a9a9a9"></i><i style="top:545.5px;width:4px;background:#c2c2c2;height:2px"></i><i style="top:549.0px;width:9px;background:#a9a9a9"></i><i style="top:552.5px;width:4px;background:#c2c2c2;height:2px"></i><i style="top:556.0px;width:22px;background:#777"></i><i style="top:559.5px;width:4px;background:#c2c2c2;height:2px"></i><i style="top:563.0px;width:9px;background:#a9a9a9"></i><i style="top:566.5px;width:4px;background:#c2c2c2;height:2px"></i><i style="top:569.9px;width:9px;background:#a9a9a9"></i><i style="top:573.4px;width:4px;background:#c2c2c2;height:2px"></i><i style="top:576.9px;width:9px;background:#a9a9a9"></i><i style="top:580.4px;width:4px;background:#c2c2c2;height:2px"></i><i style="top:583.9px;width:13px;background:#a9a9a9"></i><i style="top:587.4px;width:4px;background:#c2c2c2;height:2px"></i><i style="top:590.8px;width:9px;background:#a9a9a9"></i><i style="top:594.3px;width:4px;background:#c2c2c2;height:2px"></i><i style="top:597.8px;width:9px;background:#a9a9a9"></i><i style="top:601.3px;width:4px;background:#c2c2c2;height:2px"></i><i style="top:604.8px;width:9px;background:#a9a9a9"></i><i style="top:608.3px;width:4px;background:#c2c2c2;height:2px"></i><i style="top:611.8px;width:13px;background:#a9a9a9"></i><i style="top:615.2px;width:4px;background:#c2c2c2;height:2px"></i><i style="top:618.7px;width:9px;background:#a9a9a9"></i><i style="top:622.2px;width:4px;background:#c2c2c2;height:2px"></i><i style="top:625.7px;width:9px;background:#a9a9a9"></i><i style="top:629.2px;width:4px;background:#c2c2c2;height:2px"></i><i style="top:632.7px;width:9px;background:#a9a9a9"></i><i style="top:636.1px;width:4px;background:#c2c2c2;height:2px"></i><i style="top:639.6px;width:13px;background:#a9a9a9"></i><i style="top:643.1px;width:4px;background:#c2c2c2;height:2px"></i><i style="top:646.6px;width:9px;background:#a9a9a9"></i><i style="top:650.1px;width:4px;background:#c2c2c2;height:2px"></i><i style="top:653.6px;width:9px;background:#a9a9a9"></i><i style="top:657.0px;width:4px;background:#c2c2c2;height:2px"></i><i style="top:660.5px;width:9px;background:#a9a9a9"></i><i style="top:664.0px;width:4px;background:#c2c2c2;height:2px"></i><i style="top:667.5px;width:22px;background:#777"></i><i style="top:671.0px;width:4px;background:#c2c2c2;height:2px"></i><i style="top:674.5px;width:9px;background:#a9a9a9"></i><i style="top:678.0px;width:4px;background:#c2c2c2;height:2px"></i>
 <b style="top:1px">0</b><b style="top:112px">1</b><b style="top:223px">2</b><b style="top:335px">3</b><b style="top:446px">4</b><b style="top:558px">5</b><b style="top:669px">6</b>
</div>

<!-- canvas -->
<div class="a" style="left:64px;top:207px;width:444px;height:667px;background:#fff"></div>
<div class="a" style="left:508px;top:207px;width:939px;height:667px;background:#4a86b4"></div>
<div class="a" style="left:508px;top:207px;width:1px;height:667px;background:#1c3f5e"></div>
<div class="a" style="left:117px;top:207px;width:2px;height:667px;background:#8c8cc6"></div>
<div class="a" style="left:64px;top:351px;width:444px;height:2px;background:#8585d6"></div><div class="a" style="left:508px;top:351px;width:939px;height:2px;background:#3050c4;opacity:.9"></div>
<div class="t" style="left:110px;top:246px;height:46px;line-height:46px;font-size:40.5px;font-weight:bold;color:#000;--s:.993">Hello World!</div>
<div class="a" style="left:119px;top:352px;width:105px;height:54px"><svg width="105" height="54" viewBox="0 0 105 54" fill="#1c1c1c" shape-rendering="auto"><rect x="0.00" y="0" width="0.86" height="54"/><rect x="2.22" y="0" width="0.86" height="54"/><rect x="3.54" y="0" width="1.86" height="54"/><rect x="5.86" y="0" width="1.86" height="54"/><rect x="8.18" y="0" width="0.86" height="54"/><rect x="9.51" y="0" width="1.86" height="54"/><rect x="11.82" y="0" width="0.86" height="54"/><rect x="14.14" y="0" width="0.86" height="54"/><rect x="15.47" y="0" width="0.86" height="54"/><rect x="16.79" y="0" width="1.86" height="54"/><rect x="19.11" y="0" width="0.86" height="54"/><rect x="20.44" y="0" width="1.86" height="54"/><rect x="23.75" y="0" width="0.86" height="54"/><rect x="25.07" y="0" width="0.86" height="54"/><rect x="26.40" y="0" width="1.86" height="54"/><rect x="28.72" y="0" width="1.86" height="54"/><rect x="31.04" y="0" width="1.86" height="54"/><rect x="34.35" y="0" width="0.86" height="54"/><rect x="35.67" y="0" width="0.86" height="54"/><rect x="37.00" y="0" width="0.86" height="54"/><rect x="38.32" y="0" width="0.86" height="54"/><rect x="39.65" y="0" width="0.86" height="54"/><rect x="41.97" y="0" width="1.86" height="54"/><rect x="44.28" y="0" width="0.86" height="54"/><rect x="45.61" y="0" width="1.86" height="54"/><rect x="47.93" y="0" width="1.86" height="54"/><rect x="50.25" y="0" width="0.86" height="54"/><rect x="52.57" y="0" width="1.86" height="54"/><rect x="54.88" y="0" width="0.86" height="54"/><rect x="56.21" y="0" width="0.86" height="54"/><rect x="57.53" y="0" width="0.86" height="54"/><rect x="58.86" y="0" width="1.86" height="54"/><rect x="62.17" y="0" width="1.86" height="54"/><rect x="64.49" y="0" width="0.86" height="54"/><rect x="65.81" y="0" width="0.86" height="54"/><rect x="67.14" y="0" width="0.86" height="54"/><rect x="68.46" y="0" width="0.86" height="54"/><rect x="70.78" y="0" width="0.86" height="54"/><rect x="72.11" y="0" width="1.86" height="54"/><rect x="74.43" y="0" width="1.86" height="54"/><rect x="76.75" y="0" width="1.86" height="54"/><rect x="79.06" y="0" width="0.86" height="54"/><rect x="81.38" y="0" width="0.86" height="54"/><rect x="82.71" y="0" width="1.86" height="54"/><rect x="85.03" y="0" width="0.86" height="54"/><rect x="86.35" y="0" width="0.86" height="54"/><rect x="87.68" y="0" width="1.86" height="54"/><rect x="90.99" y="0" width="0.86" height="54"/><rect x="92.31" y="0" width="1.86" height="54"/><rect x="94.63" y="0" width="0.86" height="54"/><rect x="95.96" y="0" width="0.86" height="54"/><rect x="98.28" y="0" width="0.86" height="54"/><rect x="99.60" y="0" width="1.86" height="54"/><rect x="101.92" y="0" width="1.86" height="54"/><rect x="104.24" y="0" width="0.86" height="54"/></svg></div>
<div class="t" style="left:121px;top:405px;height:16px;line-height:16px;font-family:'DejaVu Sans Mono','Liberation Mono',monospace;font-size:14px;color:#000;--s:1.06"><span class="ast">*</span>123456789<span class="ast">*</span></div>

<div class="a" style="left:63px;top:206px;width:446px;height:1px;background:#4a4a4a"></div><div class="a" style="left:509px;top:206px;width:938px;height:1px;background:#3f76a3"></div>
<div class="a" style="left:63px;top:206px;width:2px;height:668px;background:#4a4a4a"></div>
<svg style="left:114px;top:348px" width="114" height="78" fill="rgba(255,240,230,.55)" stroke="#c9a0a0" stroke-width="1"><rect x=".5" y=".5" width="7" height="7" stroke="#b79ad0"/><rect x="53.500" y=".5" width="7" height="7"/><rect x="105.500" y=".5" width="7" height="7"/><rect x=".5" y="34.500" width="7" height="7" stroke="#b79ad0"/><rect x="105.500" y="34.500" width="7" height="7"/><rect x=".5" y="68.500" width="7" height="7" stroke="#b79ad0"/><rect x="53.500" y="68.500" width="7" height="7"/><rect x="105.500" y="68.500" width="7" height="7"/></svg>
<!-- scrollbars -->
<div class="a" style="left:1447px;top:207px;width:15px;height:667px;background:#dcdcdc"></div>
<div class="a" style="left:1447px;top:207px;width:15px;height:494px;background:#fff;border:1px solid #dcdcdc"></div>
<div class="a" style="left:1447px;top:207px;width:15px;height:15px;background:#fff;border:1px solid #dcdcdc"></div>
<div class="a" style="left:1447px;top:858px;width:15px;height:16px;background:#fff;border:1px solid #dcdcdc"></div>
<svg style="left:1450px;top:211px" width="9" height="6" fill="none" stroke="#666" stroke-width="1.2"><path d="M.5 5.5l4-4l4 4"/></svg>
<svg style="left:1450px;top:863px" width="9" height="6" fill="none" stroke="#666" stroke-width="1.2"><path d="M.5 .5l4 4l4-4"/></svg>
<div class="a" style="left:64px;top:874px;width:1400px;height:16px;background:#e9e9e9"></div><div class="a" style="left:40px;top:889px;width:1424px;height:1px;background:#b9b9b9"></div>
<div class="a" style="left:64px;top:874px;width:1383px;height:15px;background:#dcdcdc"></div>
<div class="a" style="left:64px;top:874px;width:16px;height:15px;background:#fff;border:1px solid #dcdcdc"></div>
<div class="a" style="left:80px;top:874px;width:1018px;height:15px;background:#fff;border:1px solid #dcdcdc"></div>
<div class="a" style="left:1432px;top:874px;width:15px;height:15px;background:#fff;border:1px solid #dcdcdc"></div>
<svg style="left:69px;top:877px" width="6" height="9" fill="none" stroke="#666" stroke-width="1.2"><path d="M5.5 .5l-4 4l4 4"/></svg>
<svg style="left:1437px;top:877px" width="6" height="9" fill="none" stroke="#666" stroke-width="1.2"><path d="M.5 .5l4 4l-4 4"/></svg>


<!-- right panels -->
<div class="a" style="left:1470px;top:163px;width:205px;height:358px;background:#ececec;border:1px solid #c4c4c4"></div>
<div class="a" style="left:1472px;top:182px;width:205px;height:338px;background:#fff;border:1px solid #9a9a9a"></div>
<div class="t" style="left:1491px;top:167px;font-size:11px;color:#222">Data sources</div>
<div class="a" style="left:1470px;top:531px;width:205px;height:358px;background:#ececec;border:1px solid #c4c4c4"></div>
<div class="a" style="left:1472px;top:549px;width:205px;height:338px;background:#fff;border:1px solid #9a9a9a"></div>
<div class="t" style="left:1491px;top:534px;font-size:11px;color:#222">Objects</div>

<!-- status bar -->
<div class="a" style="left:0;top:890px;width:1671px;height:20px;background:#f0f0f0"></div>
<div class="a" style="left:0;top:909px;width:1671px;height:4px;background:#0c1a2c"></div>
<div class="a" style="left:0;top:909px;width:1671px;height:1px;background:#b9cfe3"></div>
<div class="t" style="left:41px;top:894px;font-size:11px">Zebra Z4M Plus (300dpi)</div>
<div class="t" style="left:203px;top:894px;font-size:11px">-&gt;LPT1:</div>
<div class="t" style="left:321px;top:894px;font-size:11px">x; y: 0.487; 1.312</div>
<div class="t" style="left:439px;top:894px;font-size:11px">cx; cy: 0.946; 0.610</div>
<div class="t" style="left:1505px;top:894px;font-size:11px">193 days left</div>
<div class="vsep" style="left:198px;top:893px;height:15px;background:#8a8a8a"></div>
<div class="vsep" style="left:316px;top:893px;height:15px;background:#8a8a8a"></div>
<div class="vsep" style="left:434px;top:893px;height:15px;background:#8a8a8a"></div>
<div class="vsep" style="left:552px;top:893px;height:15px;background:#8a8a8a"></div>
<div class="vsep" style="left:1495px;top:893px;height:15px;background:#8a8a8a"></div>
<div class="vsep" style="left:1657px;top:893px;height:15px;background:#8a8a8a"></div>
<svg style="left:0;top:56px" width="1062" height="58">
<defs>
 <g id="prn"><rect x="5" y="0" width="11" height="6" fill="#fff" stroke="#d5dbe3" stroke-width=".8"/><path d="M1 7.500a1.500 1.500 0 0 1 1.500-1.500h16a1.500 1.500 0 0 1 1.500 1.500v8h-19z" fill="#6e6e6e"/><rect x="5.500" y="2.500" width="10" height="4.500" fill="#3a6fb5"/><rect x="5" y="12" width="11" height="8.500" fill="#fff" stroke="#c9ced6" stroke-width=".8"/><path d="M7 15.500h7M7 17.500h5" stroke="#c5cedb" stroke-width="1"/></g>
 <g id="mag"><circle cx="8.500" cy="8" r="6.300" fill="none" stroke="#666" stroke-width="2.400"/><path d="M13 13l6 6" stroke="#666" stroke-width="3.400" stroke-linecap="round"/></g>
 <path id="dda" d="M0 0h5l-2.500 3z" fill="#222"/>
 <g id="ovf" fill="none" stroke="#666" stroke-width="1.200"><path d="M.5 .8h5"/><path d="M0 3h6l-3 3z" fill="#555" stroke="none"/></g>
</defs>
<rect x="0" y="0" width="1062" height="2" fill="#f9f9f9"/>
<!-- New -->
<path d="M17.500 5.500h10.500l5 5v14h-15.500z" fill="#fff" stroke="#8a8a8a"/><path d="M28 5.500v5h5" fill="none" stroke="#8a8a8a"/>
<g stroke="#f2b544" stroke-width="1.200"><path d="M15.500 4v8M11.500 8h8M12.700 5.200l5.600 5.600M18.300 5.200l-5.600 5.600"/></g><circle cx="15.500" cy="8" r="1.600" fill="#ffe9b0"/>
<!-- Open -->
<path d="M44.500 24l2-16h7l2 2h6v4z" fill="#6b6b6b"/><path d="M44.500 24.500l4-10.500h16.500l-3.500 10.500z" fill="#f0b048"/><circle cx="60" cy="9" r="4.800" fill="#2a9d8f"/><path d="M57.500 6.500l4.300 4.300M62.300 7.500v3.800h-3.800" stroke="#fff" stroke-width="1.500" fill="none"/>
<!-- Save -->
<path d="M78 5.500h18.500v19h-16l-2.500-2.500z" fill="#8c5aa8"/><rect x="81" y="5.500" width="12.500" height="9" fill="#fff"/><path d="M83 8.500h8.500M83 10.500h8.500M83 12.500h8.500" stroke="#d9d0e3" stroke-width=".9"/><rect x="82.500" y="18" width="10" height="6.500" fill="#fff"/><rect x="85.500" y="19" width="3" height="5.500" fill="#8c5aa8"/>
<!-- Printer -->
<use href="#prn" x="115" y="4"/><path d="M127 21.500l1.200-4l7-7l2.800 2.800l-7 7z" fill="#3a6fb5" stroke="#f1f1f1" stroke-width=".8"/><path d="M127 21.500l1.200-4l2.800 2.800z" fill="#2d4f7f"/>
<!-- Printer setup -->
<use href="#prn" x="169.500" y="4"/><path d="M181 24l7.500-8a3.200 3.200 0 0 0 3.300-4.300l-2 2l-1.800-.5l-.5-1.800l2-2a3.200 3.200 0 0 0-4.200 3.500l-7 7.500a1.400 1.400 0 0 0 2.700 3.600z" fill="#555" stroke="#f1f1f1" stroke-width=".6"/>
<!-- Label/Page setup -->
<rect x="234.500" y="4.500" width="15" height="19" rx="1" fill="#fff" stroke="#777" stroke-width="1.200"/><circle cx="249" cy="20.500" r="5.800" fill="#f1f1f1"/><circle cx="249" cy="20.500" r="3.600" fill="none" stroke="#444" stroke-width="2.800" stroke-dasharray="1.700 1.130"/><circle cx="249" cy="20.500" r="2.600" fill="none" stroke="#444" stroke-width="1.800"/>
<!-- Print -->
<use href="#prn" x="279.500" y="4"/><use href="#dda" x="307.500" y="21.500"/>
<!-- Cut -->
<path d="M325 4l7 13.500M340 4l-7 13.500" stroke="#777" stroke-width="2.800" stroke-linecap="round"/><path d="M324.300 3.500l8.200 14l-2 1.500z M340.700 3.500l-8.200 14l2 1.500z" fill="#777"/><circle cx="327.500" cy="20.500" r="3.300" fill="none" stroke="#3a6fb5" stroke-width="2.300"/><circle cx="337.500" cy="20.500" r="3.300" fill="none" stroke="#3a6fb5" stroke-width="2.300"/>
<!-- Copy -->
<path d="M350.500 5.500h8l3.500 3.500v11.500h-11.500z" fill="#fff" stroke="#a8a8a8"/><path d="M352.500 9.500h5M352.500 11.500h5M352.500 13.500h5M352.500 15.500h5" stroke="#b8c6d8" stroke-width=".9"/><path d="M358.500 9.500h8l4 4v11h-12z" fill="#fff" stroke="#8a8a8a"/><path d="M366.500 9.500v4h4" fill="none" stroke="#8a8a8a"/><path d="M360.500 15.500h7.500M360.500 17.500h7.500M360.500 19.500h7.500M360.500 21.500h7.500" stroke="#6f97c8" stroke-width="1"/>
<!-- Paste -->
<rect x="383" y="6" width="15" height="17" rx="1" fill="#f5c272"/><path d="M387 6.500v-1.500h2a1.600 1.600 0 0 1 3 0h2v1.500z" fill="#a77b3a"/><path d="M392.500 11.500h7l4 4v9h-11z" fill="#fff" stroke="#8a8a8a"/><path d="M394.500 16.500h6.500M394.500 18.500h6.500M394.500 20.500h6.500M394.500 22.500h6.500" stroke="#6f97c8" stroke-width="1"/>
<!-- Undo -->
<path d="M421 22.500v-11.500l3.500 3.300c2.500-4.300 8.500-6.300 13.500-3.800c3.500 1.900 4.700 6.400 4 11.500h-4.500c.6-3.800-.2-6.700-2.700-7.600c-2.600-.9-5.400 0-6.800 2.800l3.500 3.300v2z" fill="#3a6fb5"/>
<!-- Redo -->
<path d="M475 22.500v-11.500l-3.500 3.300c-2.500-4.300-8.500-6.300-13.500-3.800c-3.500 1.900-4.700 6.400-4 11.500h4.500c-.6-3.800.2-6.700 2.700-7.600c2.600-.9 5.400 0 6.800 2.800l-3.500 3.300v2z" fill="#cdd7e2"/>
<!-- Help -->
<circle cx="501" cy="14.500" r="10.300" fill="#2a62a8"/><text x="501" y="20.500" font-family="Liberation Sans,sans-serif" font-weight="bold" font-size="17" fill="#fff" text-anchor="middle">?</text>
<use href="#ovf" x="520" y="50"/>
<!-- View mode -->
<text x="567" y="18.500" font-family="Liberation Sans,sans-serif" font-size="15.500" fill="#555" text-anchor="middle" letter-spacing=".5">12</text><path d="M555.500 20.500h10.500l1 1.500l1-1.500h10.500" stroke="#555" stroke-width="1.100" fill="none"/>
<use href="#dda" x="600.500" y="21.500"/>
<!-- Form -->
<rect x="615.500" y="6.500" width="20" height="18" fill="#fff" stroke="#8a8a8a"/><rect x="615" y="5" width="21" height="4" fill="#8c5aa8"/><path d="M619 14.500h3M619 19.500h3" stroke="#999" stroke-width="1"/><rect x="624.500" y="12.500" width="8" height="3" fill="#fff" stroke="#666" stroke-width="1"/><rect x="624.500" y="17.500" width="8" height="3" fill="#888" stroke="#666" stroke-width="1"/>
<use href="#dda" x="644.500" y="21.500"/>
<!-- Zoom factor combo -->
<rect x="665.500" y="9.500" width="43.500" height="16" fill="#fff"/>
<text x="669.500" y="22" font-family="Liberation Sans,sans-serif" font-size="11" fill="#333">133</text>
<path d="M699.500 15l2.500 2.500l2.500-2.500" stroke="#555" stroke-width="1" fill="none"/>
<!-- Zoom icons -->
<use href="#mag" x="726" y="5"/>
<use href="#mag" x="765.500" y="5"/><path d="M770.500 13h7" stroke="#3a6fb5" stroke-width="2.600"/>
<use href="#mag" x="810" y="5"/><path d="M814.500 13h8M818.500 9v8" stroke="#3a6fb5" stroke-width="2.400"/>
<!-- Zoom to width -->
<rect x="876.500" y="4.500" width="21" height="20" fill="#dbe8f6" stroke="#6a96c8"/><path d="M880 6.500h9l4 3.500v13.500h-13z" fill="#fff" stroke="#555"/><path d="M882 10.500h7M882 12.500h8M882 14.500h8" stroke="#bbb" stroke-width="1"/><path d="M882 19.500h10M884 17.500l-2 2l2 2M890 17.500l2 2l-2 2" stroke="#222" stroke-width="1.100" fill="none"/>
<!-- Zoom to page -->
<rect x="952.500" y="4.500" width="20" height="20" fill="#dbe8f6" stroke="#6a96c8"/><rect x="956.500" y="8.500" width="12" height="12" rx="1.500" fill="#fff" stroke="#666"/><path d="M959 11.500h7M959 13.500h7M959 15.500h7M959 17.500h7" stroke="#aaa" stroke-width="1.100"/><path d="M962.500 5l2 2.500h-4zM962.500 24l2-2.500h-4zM953.500 14.500l2.300-2v4zM971.500 14.500l-2.300-2v4z" fill="#222"/>
<!-- Views -->
<rect x="1013" y="5.500" width="13" height="4" fill="#3a6fb5"/><path d="M1015.500 9.500v12.500M1015.500 15h6M1015.500 22h6" stroke="#666" stroke-width="1" fill="none"/><circle cx="1017" cy="15" r="1.800" fill="#fff" stroke="#666" stroke-width=".9"/><circle cx="1017" cy="22" r="1.800" fill="#fff" stroke="#666" stroke-width=".9"/><rect x="1021" y="12.500" width="11" height="4.500" fill="#3a6fb5"/><rect x="1021" y="19.500" width="11" height="4.500" fill="#3a6fb5"/>
<use href="#dda" x="1042.500" y="21.500"/>
<use href="#ovf" x="1054" y="50"/>
</svg>
<svg style="left:0;top:116px" width="760" height="46">
<defs><g id="ovf2" fill="none" stroke="#666" stroke-width="1.100"><path d="M.5 .8h4"/><path d="M0 3h5l-2.500 2.800z" fill="#555" stroke="none"/></g></defs>
<!-- row2 : y offset 0 => abs 116 -->
<text x="14" y="14.500" font-family="Liberation Serif,serif" font-style="italic" font-weight="bold" font-size="14" fill="#6f8f73">O</text>
<path d="M139.500 8l2.500 2.500l2.500-2.500" stroke="#9a9a9a" stroke-width="1" fill="none"/>
<path d="M153.500 2v16M204.500 2v16M261.500 2v16M462.500 2v16M609.500 2v16M684.500 2v16M706.500 2v16" stroke="#c4c4c4"/>
<path d="M191.500 8l2.500 2.500l2.500-2.500" stroke="#c8c8c8" stroke-width="1" fill="none"/>
<text x="211.500" y="14.500" font-family="Liberation Serif,serif" font-weight="bold" font-size="14" fill="#cbcbcb">B</text>
<text x="230.500" y="14.500" font-family="Liberation Serif,serif" font-style="italic" font-size="14" fill="#cbcbcb">I</text>
<text x="246" y="13.500" font-family="Liberation Serif,serif" font-size="13" fill="#cbcbcb" text-decoration="underline">U</text><path d="M246 15.500h10" stroke="#cbcbcb"/>
<g fill="none" stroke="#d2d2d2" stroke-width="1.200"><rect x="269" y="3.500" width="8" height="4"/><rect x="266.500" y="10.500" width="8" height="5"/><path d="M277 5.500h2v6h-4"/></g>
<g stroke="#cfcfcf" stroke-width="1.400"><path d="M284 4h12M284 7h9M284 10h12M284 13h9M284 16h12"/><path d="M302 4h12M303.500 7h9M302 10h12M303.500 13h9M302 16h12"/><path d="M320 4h12M323 7h9M320 10h12M323 13h9M320 16h12"/><path d="M337 4h12M337 7h12M337 10h12M337 13h12M337 16h12"/><path d="M359 4h8M359 7h8M359 10h8M359 13h8M359 16h8M377 4h8M377 7h8M377 12h8M377 15h8"/></g>
<g stroke="#c9d3e0" stroke-width="1.200" fill="none"><path d="M355.500 3v14M353.500 5l2-2l2 2M353.500 15l2 2l2-2"/><path d="M373.500 3v5M371.500 5l2-2l2 2M373.500 17v-5M371.500 15l2 2l2-2"/></g>
<use href="#ovf2" x="390" y="12"/>
<path d="M404.500 3.500v13" stroke="#555" stroke-width="2" stroke-dasharray="2 2"/>
<!-- table+pencil -->
<rect x="409" y="3.500" width="12.500" height="11" fill="#fff" stroke="#555"/><rect x="408.500" y="2.500" width="13.500" height="3" fill="#3c8c78"/><path d="M413.500 6v8.500M417.500 6v8.500" stroke="#666"/><path d="M414 17l1-3l6-6l2 2l-6 6z" fill="#3a6fb5" stroke="#efefef" stroke-width=".6"/>
<rect x="428.500" y="3.500" width="12.500" height="11" fill="#fff" stroke="#555"/><rect x="428" y="2.500" width="13.500" height="3" fill="#3c8c78"/><path d="M426 10h7M430.500 7.500l2.500 2.500l-2.500 2.500" stroke="#2f8f6f" stroke-width="1.300" fill="none"/><text x="434.500" y="13.500" font-family="Liberation Sans,sans-serif" font-size="8" font-weight="bold" fill="#333">1</text>
<rect x="444.500" y="3.500" width="12" height="10.500" fill="#f6f6f6" stroke="#d4d4d4"/><path d="M449 6v6M448 14l5 2.500l4-5" stroke="#e3dccb" fill="none"/>
<!-- second group -->
<path d="M596.500 8l2.500 2.500l2.500-2.500" stroke="#c4c4c4" stroke-width="1" fill="none"/>
<g fill="#b9cde3"><path d="M614 4h2v11h-2zM622 4v11l-6-5.500zM628 4v11l-6-5.500z"/><path d="M640.500 4h2v11h-2zM640.500 4v11l-6.500-5.500z" /><path d="M652 4h0v11l6.500-5.500zM658.500 4h2v11h-2z"/><path d="M667.500 4v11l6-5.500zM673.500 4v11l6-5.500zM679 4h2v11h-2z"/></g>
<!-- binoculars -->
<g fill="#2b2b2b"><path d="M689 16v-5l2-6.500h3l1 3v8.500z"/><path d="M702.500 16v-5l-2-6.500h-3l-1 3v8.500z"/><rect x="694" y="7" width="4" height="4"/></g><path d="M691 14.500h3M698 14.500h3" stroke="#efefef" stroke-width=".8"/>
<!-- orange/gray icon -->
<rect x="714.500" y="3.500" width="8" height="12" fill="#fafafa" stroke="#9a9a9a"/><rect x="710.500" y="6.500" width="9" height="7.500" fill="#fff" stroke="#d98a3a"/><rect x="710.500" y="6.500" width="9" height="2.500" fill="#e79a4a"/><path d="M713 11h4M713 12.500h4" stroke="#d9a26a" stroke-width=".8"/>
<!-- blue window icon -->
<rect x="728.500" y="3.500" width="13" height="12.500" fill="#e9edf3" stroke="#4a6a96"/><rect x="728" y="3" width="14" height="3.500" fill="#2f5f9f"/><path d="M731 14.500c0-4 8-4 8 0z" fill="#555"/><path d="M730.500 15h10" stroke="#333" stroke-width="1.400"/>
<use href="#ovf2" x="748" y="12"/>

<!-- row3 : y offset 23 => abs 139 -->
<g transform="translate(0,23)">
<g fill="#555"><rect x="14" y="5" width="1" height="12"/><rect x="16" y="5" width="2" height="12"/><rect x="19" y="5" width="1" height="12"/><rect x="21" y="5" width="1.500" height="12"/><rect x="23.500" y="5" width="1" height="12"/><rect x="25.500" y="5" width="1.500" height="12"/><rect x="28" y="5" width="1" height="12"/></g>
<path d="M139.500 9.500l2.500 2.500l2.500-2.500" stroke="#444" stroke-width="1.100" fill="none"/>
<path d="M153.500 2v17M192.500 2v17M226.500 2v17M265.500 2v17M304.500 2v17M344.500 2v17" stroke="#c4c4c4"/>
<!-- blue box pencil -->
<path d="M157.500 9l9-5l5 3v5l-9 5.500l-5-3.500z" fill="#2f6db5"/><path d="M157.500 9l5 3.500l9-5.500M162.500 12.500v5" stroke="#9fc0e6" stroke-width=".8" fill="none"/><path d="M161.500 18l1-2.500l5-5l1.500 1.500l-5 5z" fill="#555" stroke="#efefef" stroke-width=".5"/>
<path d="M174.500 9l9-5l5 3v5l-9 5.500l-5-3.500z" fill="#2f6db5"/><path d="M174.500 9l5 3.500l9-5.500M179.500 12.500v5" stroke="#9fc0e6" stroke-width=".8" fill="none"/><path d="M182.500 12.500l5 5M187.500 12.500l-5 5" stroke="#d42a20" stroke-width="1.700"/>
<!-- orange paste -->
<rect x="198" y="6" width="9" height="10" fill="#8a8a8a"/><rect x="200.500" y="3.500" width="8" height="5" fill="#333"/><rect x="203" y="9" width="9" height="9" fill="#f0b048"/><rect x="205" y="7" width="7" height="3" fill="#f6cf8c"/>
<path d="M216 10h5l-2.500 3z" fill="#222"/>
<!-- printer check -->
<rect x="233" y="3.500" width="8" height="4" fill="#fff" stroke="#3a6fb5"/><rect x="230.500" y="7" width="12" height="7" rx="1" fill="#4a6a96"/><rect x="233" y="11.500" width="7" height="5" fill="#fff" stroke="#8a8a8a" stroke-width=".8"/><circle cx="240" cy="14.500" r="4" fill="#2f9f6f" stroke="#efefef" stroke-width=".7"/><path d="M238 14.500l1.500 1.500l2.500-3" stroke="#fff" stroke-width="1.200" fill="none"/>
<!-- lock -->
<path d="M250 10v-3a3.500 3.500 0 0 1 7 0v1" stroke="#f0b048" stroke-width="1.800" fill="none"/><rect x="252" y="9.500" width="9.500" height="8.500" fill="#f0b048"/><rect x="256" y="12" width="1.500" height="4" fill="#fff3dc"/>
<!-- disabled -->
<rect x="271" y="5" width="11" height="12" fill="#f5e6d3"/><path d="M270 4h13v14h-13z" fill="none" stroke="#d9d9d9" stroke-dasharray="1.500 3"/>
<rect x="289" y="6.500" width="11" height="10" fill="#f5e6d3"/><path d="M288 4h13v14h-13z" fill="none" stroke="#d9d9d9" stroke-dasharray="1.500 3"/>
<!-- flip -->
<path d="M315.500 17v-9l-6.500 9z" fill="#9a9a9a"/><path d="M316 17v-9l6.500 9z" fill="#7a3fa3"/><path d="M311.500 8.500c0-3.500 4.500-4.500 6.500-2.500M318.800 3.200v3.300h-3.300" stroke="#3a6fb5" stroke-width="1.400" fill="none"/>
<path d="M333 17v-9l-6.500 9z" fill="#7a3fa3"/><path d="M333.500 17v-9l6.500 9z" fill="#9a9a9a"/><path d="M337.500 8.500c0-3.500-4.500-4.500-6.500-2.500M330.200 3.200v3.300h3.300" stroke="#3a6fb5" stroke-width="1.400" fill="none"/>
<!-- orange sizing icons -->
<rect x="349.500" y="3" width="9.500" height="13" fill="#f3bd64"/><path d="M354.250 4.500v10M352.500 6.500l1.750-2l1.750 2M352.500 12.500l1.750 2l1.750-2" stroke="#333" stroke-width="1" fill="none"/>
<rect x="367.500" y="3" width="9" height="13" fill="#f3bd64"/><path d="M369.500 3.500h5l-2.500 3zM369.500 15.500h5l-2.500-3z" fill="#333"/><path d="M370 9.500h4" stroke="#333"/>
<rect x="382.500" y="5.500" width="13" height="9" fill="#f3bd64"/><path d="M384 10h10M386 8l-2 2l2 2M392 8l2 2l-2 2" stroke="#333" stroke-width="1" fill="none"/>
<rect x="400" y="5.500" width="13.500" height="9" fill="#f3bd64"/><path d="M400.500 7.500v5l3-2.500zM413 7.500v5l-3-2.500z" fill="#333"/><path d="M404 10h5" stroke="#333"/>
<!-- line icons -->
<g stroke="#333" stroke-width="2"><path d="M418 4h14M418 8h14M418 12h14"/><path d="M435.500 4h14M435.500 8h14M435.500 12h14"/></g>
<path d="M418 16h6" stroke="#333" stroke-width="2"/><path d="M425 16h7" stroke="#d4483c" stroke-width="2"/>
<path d="M435.500 16h6" stroke="#333" stroke-width="2"/><path d="M443 15h7M446.500 11.500v7" stroke="#2f9f6f" stroke-width="1.800"/>
<use href="#ovf2" x="455" y="14"/>
</g>
</svg>
<!-- left toolbox -->
<div class="a" style="left:0;top:163px;width:38px;height:327px;background:#efefef"></div>
<div class="a" style="left:4px;top:167px;width:30px;height:2px;background-image:linear-gradient(90deg,#666 50%,transparent 50%);background-size:4px 2px"></div>
<div class="a" style="left:1px;top:171px;width:36px;height:25px;background:linear-gradient(#fbd49b,#f8b85a 45%,#f9c376 70%,#fce3bd)"></div>
<svg style="left:0;top:163px" width="38" height="330">
 <!-- arrow -->
 <path d="M12.500 11v19.500l4.500-4.200l3 6.200l2.800-1.300l-3-6.200h6.200z" fill="#6b6259"/>
 <!-- T -->
 <text x="14.500" y="59" font-family="Liberation Serif,serif" font-size="31" font-weight="bold" text-anchor="middle" fill="#444">T</text>
 <path d="M27.500 49h5l-2.500 3z M27.500 73h5l-2.500 3z M27.500 98h5l-2.500 3z" fill="#222"/>
 <!-- barcode -->
 <g fill="#3c3c3c"><rect x="3" y="66" width="1.500" height="16"/><rect x="5.500" y="66" width="2.500" height="16"/><rect x="9" y="66" width="1" height="16"/><rect x="11" y="66" width="2.500" height="16"/><rect x="14.500" y="66" width="1" height="16"/><rect x="16.500" y="66" width="2" height="16"/><rect x="19.500" y="66" width="1" height="16"/><rect x="21.500" y="66" width="2.500" height="16"/></g>
 <!-- image -->
 <rect x="3.500" y="88.500" width="20" height="20" fill="#e8f0fa" stroke="#7fa3cf"/>
 <path d="M5 107l5-8l3.500 5l3-4l5.500 7z" fill="#2f6db5"/><path d="M8 96.500a2 2 0 0 1 2-3a3 3 0 0 1 5.500 0a2 2 0 0 1 1.500 3z" fill="#2f6db5"/>
 <path d="M3 113.500h32" stroke="#c9c9c9"/>
 <!-- line-text -->
 <path d="M9.500 118v20" stroke="#555" stroke-width="3.200"/><path d="M13 127h16" stroke="#555" stroke-width="3"/>
 <!-- rect -->
 <rect x="9" y="145" width="18.500" height="14" fill="none" stroke="#555" stroke-width="2"/>
 <!-- ellipse -->
 <ellipse cx="18" cy="176.500" rx="9.500" ry="8" fill="none" stroke="#555" stroke-width="2"/>
 <!-- polygon -->
 <path d="M9 209v-9.500l9.500-9l2 7.500h7v11z" fill="none" stroke="#555" stroke-width="2" stroke-linejoin="miter"/>
 <!-- line -->
 <path d="M9 233l18-17" stroke="#555" stroke-width="2.200"/>
 <!-- rounded rect -->
 <rect x="9" y="243" width="18.500" height="14" rx="4" fill="none" stroke="#555" stroke-width="2"/>
 <!-- shapes -->
 <circle cx="21" cy="271" r="6.500" fill="#2f6db5"/><rect x="9.500" y="268" width="9" height="9" fill="#2f6db5" stroke="#efefef" stroke-width="1"/><path d="M15.500 272l10 5.500l-10 5.500z" fill="#2f6db5" stroke="#efefef" stroke-width="1"/>
 <path d="M3 288.500h32" stroke="#c9c9c9"/>
 <!-- extended -->
 <rect x="9.500" y="297.500" width="14" height="14" fill="#fff" stroke="#2f6db5" stroke-width="3.500"/>
 <path d="M9 293.500h20" stroke="#333" stroke-width="2" stroke-dasharray="2 2"/><path d="M28.500 293v20" stroke="#333" stroke-width="2" stroke-dasharray="2 2"/>
 <path d="M30.500 320v4M32.500 320l2.500 2l-2.500 2z" stroke="#666" fill="#666" stroke-width=".8"/>
</svg>
<!-- ruler corner -->
<div class="a" style="left:42px;top:184px;width:22px;height:22px;background:#f4f4f4;border:1px solid #9a9a9a;border-bottom:2px solid #b5b5b5"></div>
<svg style="left:44px;top:185px" width="18" height="19"><path d="M1.500 .5h11l4 4v13.500h-15z" fill="#fafafa" stroke="#8a8a8a"/><path d="M12.500 .5v4h4" fill="none" stroke="#8a8a8a"/><text x="8.500" y="15.500" font-family="Liberation Serif,serif" font-size="14" text-anchor="middle" fill="#4a7ab8">A</text></svg>
<!-- tab icon + close -->
<svg style="left:44px;top:165px" width="100" height="14"><path d="M1.500 .5h6.500l3.500 3.500v9.500h-10z" fill="#fff" stroke="#555"/><path d="M8 .5v3.500h3.500" fill="none" stroke="#555"/><path d="M83 2.500l8 8M91 2.500l-8 8" stroke="#222" stroke-width="1.300"/></svg>
<style>.pi{position:absolute;white-space:nowrap;font-size:11px;line-height:14px;height:14px;color:#1e1e1e;transform:scaleX(.93);transform-origin:0 50%}</style>
<!-- Data sources panel -->
<svg style="left:1473px;top:167px" width="13" height="14"><g fill="#f6cf8c" stroke="#fdf0d8" stroke-width=".8"><path d="M.5 9.500v2c0 1.200 2.500 2 5.500 2s5.500-.8 5.500-2v-2z"/><ellipse cx="6" cy="9.500" rx="5.500" ry="2"/><path d="M.5 6v2c0 1.200 2.500 2 5.500 2s5.500-.8 5.500-2v-2z"/><ellipse cx="6" cy="6" rx="5.500" ry="2"/><path d="M.5 2.500v2c0 1.200 2.500 2 5.500 2s5.500-.8 5.500-2v-2z"/><ellipse cx="6" cy="2.500" rx="5.500" ry="2"/></g></svg>
<svg style="left:1645px;top:171px" width="26" height="9"><path d="M0 1h8l-4 4.500z" fill="#111"/><path d="M17.500 0l8 8M25.500 0l-8 8" stroke="#111" stroke-width="1.300"/></svg>
<svg style="left:1492px;top:185px" width="16" height="120">
 <!-- database -->
 <path d="M.8 2.500v9c0 1.300 2.500 2.300 5.500 2.300s5.500-1 5.500-2.300v-9z" fill="#f0b048"/><ellipse cx="6.300" cy="2.500" rx="5.500" ry="2.200" fill="#f8cf82"/>
 <!-- date -->
 <g transform="translate(0,17.500)"><rect x=".5" y="2.500" width="11" height="10" fill="#fff" stroke="#8a8a8a"/><rect x="0" y="1" width="12" height="3" fill="#3a6fb5"/><path d="M2 0v2M4.500 0v2M7 0v2M9.500 0v2" stroke="#3a6fb5" stroke-width="1"/><path d="M2.500 7h2M2.500 9.500h2M6 6.500h2" stroke="#999"/><circle cx="10.500" cy="10.500" r="3.300" fill="#fff" stroke="#555" stroke-width="1"/><path d="M10.500 8.800v1.900h1.500" stroke="#555" fill="none" stroke-width=".9"/></g>
 <!-- fx -->
 <text x="0" y="46.500" font-family="Liberation Serif,serif" font-style="italic" font-size="14.500" fill="#444" font-weight="bold" textLength="12.500" lengthAdjust="spacingAndGlyphs">fx</text>
 <!-- when printed -->
 <g transform="translate(0,52.500)"><rect x=".5" y=".5" width="12.500" height="12.500" fill="#fff" stroke="#8a8a8a"/><rect x=".5" y=".5" width="12.500" height="3" fill="#7a4fa3"/><path d="M3 7h1.500M3 10h1.500M6 7h4.500M6 10h4.500" stroke="#888" stroke-width="1.500"/></g>
 <!-- table lookup -->
 <g transform="translate(0,70)"><rect x=".5" y=".5" width="12.500" height="11.500" fill="#fff" stroke="#8a8a8a"/><rect x=".5" y=".5" width="12.500" height="3" fill="#2f5f9f"/><path d="M2.500 6.500h1.500M2.500 9.500h1.500" stroke="#888"/><circle cx="8.500" cy="8" r="2.800" fill="#fff" stroke="#444" stroke-width="1.100"/><path d="M10.500 10l3 3" stroke="#444" stroke-width="1.600"/></g>
 <!-- counter -->
 <g transform="translate(0,87.500)"><rect x=".5" y=".5" width="13" height="12.500" rx="1" fill="#fff" stroke="#8a8a8a"/><text x="1.500" y="9" font-family="Liberation Sans,sans-serif" font-size="6.500" fill="#444" font-weight="bold">00</text><text x="9.500" y="11" font-family="Liberation Sans,sans-serif" font-size="6" fill="#444" font-weight="bold">1</text></g>
 <!-- advanced gears -->
 <g transform="translate(0,105)" fill="none" stroke="#555"><circle cx="4.500" cy="9.500" r="2.600" stroke-width="2.200" stroke-dasharray="1.600 1.100"/><circle cx="4.500" cy="9.500" r="1.800" stroke-width="1.400"/><circle cx="10.500" cy="5" r="1.900" stroke-width="1.600" stroke-dasharray="1.200 .8"/><circle cx="10.500" cy="5" r="1.300" stroke-width="1"/><circle cx="4" cy="2.500" r="1.500" stroke-width="1.200"/></g>
</svg>
<div class="pi" style="left:1511px;top:186px">Database(0)</div>
<div class="pi" style="left:1511px;top:203px">Date(0)</div>
<div class="pi" style="left:1511px;top:221px">Formula(0)</div>
<div class="pi" style="left:1511px;top:238px">When printed(0)</div>
<div class="pi" style="left:1511px;top:256px">Table lookup(0)</div>
<div class="pi" style="left:1511px;top:273px">Counter(0)</div>
<div class="pi" style="left:1511px;top:291px">Advanced(0)</div>
<!-- Objects panel -->
<svg style="left:1473px;top:534px" width="14" height="13"><path d="M.5 5l8.500-4.500l4.500 2.500v4.500l-8.500 5l-4.500-3z" fill="#2f6db5"/><path d="M.5 5l4.500 3l8.500-5M5 8v4.500" stroke="#9fc0e6" stroke-width=".9" fill="none"/></svg>
<svg style="left:1645px;top:538px" width="26" height="9"><path d="M0 1h8l-4 4.500z" fill="#111"/><path d="M17.500 0l8 8M25.500 0l-8 8" stroke="#111" stroke-width="1.300"/></svg>
<svg style="left:1480px;top:552px" width="30" height="175">
 <path d="M1.500 10.500l4.500-4.500v4.500z M1.500 45.500l4.500-4.500v4.500z" fill="#333"/>
 <text x="19.500" y="14" font-family="Liberation Serif,serif" font-size="17" font-weight="bold" text-anchor="middle" fill="#3a3a3a">T</text>
 <g fill="#444" transform="translate(12.500,37)"><rect x="0" y="0" width="1" height="12"/><rect x="2" y="0" width="2" height="12"/><rect x="5" y="0" width="1" height="12"/><rect x="7" y="0" width="1.500" height="12"/><rect x="9.500" y="0" width="1" height="12"/><rect x="11.500" y="0" width="1" height="12"/><rect x="13.500" y="0" width="1.500" height="12"/></g>
 <path d="M31 60.500h6M34.500 58l2.500 2.500l-2.500 2.500" stroke="#d82a20" stroke-width="1.500" fill="none" transform="translate(-1,0)"/>
 <g transform="translate(12.500,71.500)"><rect x=".5" y=".5" width="13" height="12" fill="#e8f0fa" stroke="#2f6db5"/><path d="M1.500 11.500l3-4.500l2.500 3l2-2.500l3.500 4z" fill="#2f6db5"/><path d="M4 5.500h5.500a1.500 1.500 0 0 0-2-2a2 2 0 0 0-3.500 2z" fill="#2f6db5"/></g>
 <path d="M13 103l13-12" stroke="#444" stroke-width="1.600"/>
 <rect x="13" y="108" width="13" height="10.500" fill="#fff" stroke="#444" stroke-width="1.300"/>
 <ellipse cx="19.500" cy="131" rx="6.500" ry="5.300" fill="#fff" stroke="#444" stroke-width="1.300"/>
 <path d="M13 154v-6l5.500-5.500l1.500 4.500h6v7z" fill="#fff" stroke="#444" stroke-width="1.300"/>
 <rect x="14" y="161.500" width="8.500" height="8.500" fill="#fff" stroke="#2f6db5" stroke-width="2.400"/><path d="M13 158h12" stroke="#333" stroke-width="1.400" stroke-dasharray="1.500 1.500"/><path d="M26 158v13" stroke="#333" stroke-width="1.400" stroke-dasharray="1.500 1.500"/>
</svg>
<div class="pi" style="left:1511px;top:554px">Text(1)</div>
<div class="pi" style="left:1525px;top:571px">Text0</div>
<div class="pi" style="left:1511px;top:589px">Barcode(1)</div>
<div class="pi" style="left:1525px;top:606px">Barcode0</div>
<div class="pi" style="left:1511px;top:624px">Image(0)</div>
<div class="pi" style="left:1511px;top:641px">Line(0)</div>
<div class="pi" style="left:1511px;top:659px">Rectangle(0)</div>
<div class="pi" style="left:1511px;top:676px">Circle/Ellipse(0)</div>
<div class="pi" style="left:1511px;top:694px">Polygon(0)</div>
<div class="pi" style="left:1511px;top:711px">Extended objects(0)</div>
<style>
#dlg{left:575px;top:232px;width:527px;height:444px;background:#f7f7f7;box-shadow:0 2px 8px 1px rgba(10,30,60,.55);border:1px solid #1f568c;border-top-color:#fff;overflow:hidden}
#dlg .t{font-size:11px;color:#222}
.dd{position:absolute;border:1px solid #6e6e6e;border-radius:3px;background:linear-gradient(#f4f4f4,#eaeaea 45%,#d6d6d6);box-shadow:inset 0 0 0 1px rgba(255,255,255,.7)}
.dd:after{content:"";position:absolute;right:4px;top:50%;margin-top:-2px;border:3px solid transparent;border-top:4px solid #111;border-bottom:none}
.btn{position:absolute;top:417px;width:57px;height:22px;border:1px solid #4a4f5c;border-radius:4px;background:linear-gradient(#d9dde6,#b9c0cf 50%,#a3acbf);box-shadow:inset 0 0 0 1px rgba(255,255,255,.55);text-align:center;font-size:11px;line-height:20px;color:#1a1a1a}
.li{position:absolute;left:34px;margin-top:-.5px;font-size:11px;color:#2a2a2a;line-height:14px;white-space:nowrap;transform:scaleX(.88);transform-origin:0 50%}
.gb{position:absolute;border:1px solid #e4e4e4;border-radius:4px;background:#f9f9f9}
</style>
<div class="a" id="dlg">
 <!-- coords inside are relative to (576,233) -->
 <div class="a" style="left:0;top:0;width:525px;height:5px;background:#fff"></div>
 <div class="a" style="left:0;top:5px;width:525px;height:31px;background:#22619a"></div>
 <div class="a" style="left:0;top:36px;width:525px;height:46px;background:linear-gradient(#a9a9a9,#cfcfcf 30%,#f1f1f1 65%,#f7f7f7)"></div>
 <div class="a" style="left:300px;top:36px;width:225px;height:40px;background:linear-gradient(90deg,rgba(120,120,120,0),rgba(120,120,120,.5) 22%);-webkit-mask-image:linear-gradient(#000 35%,transparent);mask-image:linear-gradient(#000 35%,transparent)"></div>
 <svg style="left:0;top:36px" width="525" height="36"><defs><linearGradient id="wf" x1="0" y1="0" x2="0" y2="1"><stop offset="0" stop-color="#fff" stop-opacity="1"/><stop offset=".55" stop-color="#fff" stop-opacity=".8"/><stop offset="1" stop-color="#fff" stop-opacity="0"/></linearGradient></defs>
 <g fill="url(#wf)"><rect x="343" y="0" width="3" height="36"/><rect x="353" y="0" width="3.5" height="36"/><rect x="360" y="0" width="7" height="36"/><rect x="374.5" y="0" width="8" height="36"/><rect x="389" y="0" width="3.5" height="36"/><rect x="396" y="0" width="3.5" height="36"/><rect x="417" y="0" width="8.5" height="36"/><rect x="432.5" y="0" width="2.5" height="36"/><rect x="437.5" y="0" width="2" height="36"/><rect x="447" y="0" width="10.5" height="36"/><rect x="475.5" y="0" width="2" height="36"/><rect x="494.5" y="0" width="7" height="36"/><rect x="506" y="0" width="3" height="36"/><rect x="516" y="0" width="2.5" height="36"/></g></svg>
 <!-- title content -->
 <svg style="left:7px;top:12px" width="60" height="18">
  <defs><radialGradient id="nb" cx=".4" cy=".3" r=".8"><stop offset="0" stop-color="#fafcff"/><stop offset=".6" stop-color="#cfd6e0"/><stop offset="1" stop-color="#9aa8ba"/></radialGradient>
  <radialGradient id="nb2" cx=".4" cy=".3" r=".8"><stop offset="0" stop-color="#e8f2fb"/><stop offset=".6" stop-color="#a9c4de"/><stop offset="1" stop-color="#6f95bb"/></radialGradient></defs>
  <circle cx="8.5" cy="8.5" r="8" fill="url(#nb)" stroke="#5f7890" stroke-width=".6"/><circle cx="28" cy="8.5" r="8" fill="url(#nb2)" stroke="#5f7890" stroke-width=".6"/>
  <path d="M12.5 8.5h-7M8.5 5l-3.5 3.5l3.5 3.5" stroke="#fff" stroke-width="1.8" fill="none"/><path d="M24 8.5h7M28 5l3.500 3.5l-3.5 3.5" stroke="#fff" stroke-width="1.8" fill="none"/>
  <g fill="#1b4468"><rect x="50" y="2" width="1.5" height="13"/><rect x="52.5" y="2" width="1" height="13"/><rect x="54.5" y="2" width="2" height="13"/></g>
 </svg>
 <div class="t" style="left:74px;top:14px;font-size:11px;color:#fff;--s:1.03">New barcode object</div>
 <div class="a" style="left:468px;top:13px;width:24px;height:13px;border-radius:2px;background:linear-gradient(#c9d8ea,#a8bfd9);border:1px solid #8fa9c6"></div>
 <svg style="left:475px;top:16px" width="10" height="8" fill="none" stroke="#2d4a66" stroke-width="1.2"><rect x=".6" y=".6" width="8.8" height="6.8"/><rect x="3" y="3" width="4" height="2" fill="#2d4a66" stroke="none"/></svg>
 <div class="a" style="left:494px;top:13px;width:25px;height:13px;border-radius:2px;background:linear-gradient(#e08a78,#c64a36 50%,#b53a28);border:1px solid #a44334"></div>
 <svg style="left:502px;top:16px" width="9" height="8" stroke="#fff" stroke-width="2" fill="none"><path d="M.5 .5l8 7M8.500 .5l-8 7"/></svg>
 <div class="t" style="left:8px;top:58px;font-size:14.500px;color:#6a6a6a;--s:.97;height:16px;line-height:16px">Set the type and the content of your barcode object</div>

 <!-- left column -->
 <div class="t" style="left:13px;top:89px">Symbology</div>
 <div class="a" style="left:8px;top:109px;width:198px;height:19px;background:#fff;border:1px solid #dcdcdc"></div>
 <div class="t" style="left:13px;top:112px;font-style:italic;color:#8c8c8c">Search</div>
 <svg style="left:189px;top:113px" width="11" height="11" fill="none" stroke="#4a78b8" stroke-width="1.5"><circle cx="6.700" cy="4.200" r="3.200"/><path d="M4.300 6.500l-3.500 3.800" stroke-width="2"/></svg>
 <div class="a" style="left:8px;top:133px;width:198px;height:260px;background:#fafafa;border:1px solid #a9a9a9"></div>
 <div class="a" style="left:13px;top:172px;width:173px;height:220px;background:#e9f3fc"></div>
 <div class="a" style="left:13px;top:135px;width:173px;height:16px;background:#d2d2d2"></div>
 <div class="a" style="left:13px;top:154px;width:173px;height:18px;background:#d2d2d2"></div>
 <svg style="left:14px;top:135px" width="16" height="36" fill="#dadada" stroke="#a8a8a8" stroke-width=".8"><circle cx="8" cy="8" r="7"/><circle cx="8" cy="28" r="7"/><path d="M5.500 6.500l2.500 2.500l2.500-2.500M5.500 29.500l2.500-2.500l2.500 2.500" fill="none" stroke="#666" stroke-width="1.2"/></svg>
 <div class="t" style="left:38px;top:136px;font-weight:bold;color:#111">Postal</div>
 <div class="t" style="left:38px;top:156px;font-weight:bold;color:#111">Linear</div>
 <div class="a" style="left:16px;top:375px;width:170px;height:16px;background:linear-gradient(#d6ecfc,#a9d5f5)"></div>
 <div class="li" style="top:173px">2/5 BEARED</div>
 <div class="li" style="top:189px">2/5 INDUSTRIAL</div>
 <div class="li" style="top:205px">2/5 INTERLEAVED</div>
 <div class="li" style="top:221px">2/5 MATRIX Eur</div>
 <div class="li" style="top:237px">2/5 MATRIX Jap</div>
 <div class="li" style="top:252px">2/5 STANDARD</div>
 <div class="li" style="top:268px">CODABAR</div>
 <div class="li" style="top:284px">CODE 11</div>
 <div class="li" style="top:299px;font-weight:bold;font-style:italic;color:#111">CODE 128</div>
 <div class="li" style="top:314px">AUTO</div>
 <div class="li" style="top:329px">CODE A</div>
 <div class="li" style="top:345px">CODE B</div>
 <div class="li" style="top:361px">CODE C</div>
 <div class="li" style="top:377px">CODE 39</div>
 <svg style="left:0;top:0" width="40" height="400"><defs><g id="lib"><rect x=".5" y=".5" width="13" height="11" fill="#cfe0f2" stroke="#9fb4c9" stroke-width=".8"/><path d="M3 2v8M5.500 2v8M7.500 2v8M10 2v8" stroke="#2d5f9a" stroke-width="1.100"/><path d="M11.800 2v8" stroke="#8aa9cc" stroke-width=".8"/></g><g id="lip"><path d="M3.500 .5h6l1.300 7.500h-8.600z" fill="#e9e9e9" stroke="#4a4a4a" stroke-width="1.100"/><path d="M5.300 1v7M7.700 1v7M3 3.500h7M2.700 6h7.600" stroke="#6a6a6a" stroke-width=".7"/><path d="M1 8.500h11a1 1 0 0 1 0 2.500h-11a1 1 0 0 1 0-2.500z" fill="#5a5a5a"/></g></defs><use href="#lib" x="17" y="173.5"/><use href="#lip" x="18" y="189.3"/><use href="#lip" x="18" y="205.0"/><use href="#lib" x="17" y="220.8"/><use href="#lib" x="17" y="236.6"/><use href="#lip" x="18" y="252.3"/><use href="#lip" x="18" y="268.0"/><use href="#lip" x="18" y="284.0"/><use href="#lip" x="18" y="299.5"/><use href="#lip" x="18" y="377.0"/></svg>
 <!-- list scrollbar -->
 <div class="a" style="left:189px;top:134px;width:16px;height:258px;background:#f1f1f1"></div>
 <div class="a" style="left:190px;top:156px;width:12.500px;height:79px;border:1px solid #a5a5a5;border-radius:2px;background:linear-gradient(90deg,#e9e9e9,#cfcfcf 60%,#c2c2c2)"></div>
 <div class="a" style="left:193.500px;top:192px;width:5.500px;height:7px;background:repeating-linear-gradient(#777 0 1px,transparent 1px 2.500px)"></div>
 <svg style="left:192.500px;top:139px" width="8" height="250" fill="#666"><path d="M0.500 4l3-3.500l3 3.500zM0.500 243l3 3.500l3-3.500z"/></svg>

 <!-- right column -->
 <div class="gb" style="left:216px;top:93px;width:299px;height:253px"></div>
 <div class="t" style="left:220px;top:85px;font-size:11.500px;background:#f7f7f7;padding:0 2px">Data source</div>
 <div class="dd" style="left:223px;top:105px;width:284px;height:22px"></div>
 <div class="t" style="left:227px;top:108px">Fixed data</div>
 <div class="t" style="left:228px;top:132px">Barcode data</div>
 <div class="t" style="left:451px;top:132px">Check digit</div>
 <div class="a" style="left:223px;top:152px;width:258px;height:19px;background:#fff;border:1px solid #cfd4da;border-top-color:#9fb4c9"></div>
 <div class="t" style="left:228px;top:155px;font-size:10.5px">123456789</div>
 <div class="a" style="left:485px;top:152px;width:22px;height:19px;background:#f5f5f5;border:1px solid #c9c9c9"></div>
 <div class="t" style="left:282px;top:194px">Check digit</div>
 <div class="t" style="left:372px;top:194px">Human readable</div>
 <div class="dd" style="left:277px;top:215px;width:72px;height:20px"></div>
 <div class="t" style="left:281px;top:218px">None</div>
 <div class="dd" style="left:366px;top:215px;width:87px;height:20px"></div>
 <div class="t" style="left:370px;top:218px">Default</div>
 <div class="gb" style="left:216px;top:253px;width:299px;height:137px"></div>
 <div class="t" style="left:220px;top:244px;background:#f7f7f7;padding:0 2px;font-size:11.500px">Preview</div>
 <div class="a" style="left:267px;top:258px;width:199px;height:128px;background:#fff"></div>
 <div class="a" style="left:269px;top:261px;width:194px;height:99px"><svg width="194" height="99" viewBox="0 0 194 99" fill="#000" shape-rendering="auto"><rect x="0.00" y="0" width="1.31" height="99"/><rect x="4.18" y="0" width="1.31" height="99"/><rect x="6.79" y="0" width="2.87" height="99"/><rect x="10.97" y="0" width="2.87" height="99"/><rect x="15.14" y="0" width="1.31" height="99"/><rect x="17.76" y="0" width="2.87" height="99"/><rect x="21.93" y="0" width="1.31" height="99"/><rect x="26.11" y="0" width="1.31" height="99"/><rect x="28.72" y="0" width="1.31" height="99"/><rect x="31.33" y="0" width="2.87" height="99"/><rect x="35.51" y="0" width="1.31" height="99"/><rect x="38.12" y="0" width="2.87" height="99"/><rect x="43.87" y="0" width="1.31" height="99"/><rect x="46.48" y="0" width="1.31" height="99"/><rect x="49.09" y="0" width="2.87" height="99"/><rect x="53.27" y="0" width="2.87" height="99"/><rect x="57.44" y="0" width="2.87" height="99"/><rect x="63.19" y="0" width="1.31" height="99"/><rect x="65.80" y="0" width="1.31" height="99"/><rect x="68.41" y="0" width="1.31" height="99"/><rect x="71.02" y="0" width="1.31" height="99"/><rect x="73.63" y="0" width="1.31" height="99"/><rect x="77.81" y="0" width="2.87" height="99"/><rect x="81.99" y="0" width="1.31" height="99"/><rect x="84.60" y="0" width="2.87" height="99"/><rect x="88.78" y="0" width="2.87" height="99"/><rect x="92.95" y="0" width="1.31" height="99"/><rect x="97.13" y="0" width="2.87" height="99"/><rect x="101.31" y="0" width="1.31" height="99"/><rect x="103.92" y="0" width="1.31" height="99"/><rect x="106.53" y="0" width="1.31" height="99"/><rect x="109.14" y="0" width="2.87" height="99"/><rect x="114.89" y="0" width="2.87" height="99"/><rect x="119.06" y="0" width="1.31" height="99"/><rect x="121.67" y="0" width="1.31" height="99"/><rect x="124.29" y="0" width="1.31" height="99"/><rect x="126.90" y="0" width="1.31" height="99"/><rect x="131.07" y="0" width="1.31" height="99"/><rect x="133.69" y="0" width="2.87" height="99"/><rect x="137.86" y="0" width="2.87" height="99"/><rect x="142.04" y="0" width="2.87" height="99"/><rect x="146.22" y="0" width="1.31" height="99"/><rect x="150.40" y="0" width="1.31" height="99"/><rect x="153.01" y="0" width="2.87" height="99"/><rect x="157.18" y="0" width="1.31" height="99"/><rect x="159.80" y="0" width="1.31" height="99"/><rect x="162.41" y="0" width="2.87" height="99"/><rect x="168.15" y="0" width="1.31" height="99"/><rect x="170.76" y="0" width="2.87" height="99"/><rect x="174.94" y="0" width="1.31" height="99"/><rect x="177.55" y="0" width="1.31" height="99"/><rect x="181.73" y="0" width="1.31" height="99"/><rect x="184.34" y="0" width="2.87" height="99"/><rect x="188.52" y="0" width="2.87" height="99"/><rect x="192.69" y="0" width="1.31" height="99"/></svg></div>
 <div class="t" style="left:271px;top:356px;height:30px;line-height:30px;font-family:'DejaVu Sans Mono','Liberation Mono',monospace;font-size:27.200px;color:#000;--s:1;letter-spacing:.1px"><span class="ast">*</span>123456789<span class="ast">*</span></div>
 <!-- footer -->
 <div class="a" style="left:0;top:409px;width:525px;height:2px;background:#22619a"></div>
 <div class="a" style="left:0;top:411px;width:525px;height:32px;background:#f0f0f0"></div>
 <div class="btn" style="left:260px;background:#f3f3f3;border-color:#c9c9c9;color:#a9a9a9">Back</div>
 <div class="btn" style="left:327px">Next</div>
 <div class="btn" style="left:393px">Finish</div>
 <div class="btn" style="left:460px">Cancel</div>
 <!-- mouse cursor -->
 <svg style="left:322px;top:168px" width="13" height="20"><path d="M1 1v15l3.500-3.300l2.500 5.800l2.300-1l-2.500-5.700h5z" fill="#fff" stroke="#111" stroke-width="1"/></svg>
</div>
</body></html>
